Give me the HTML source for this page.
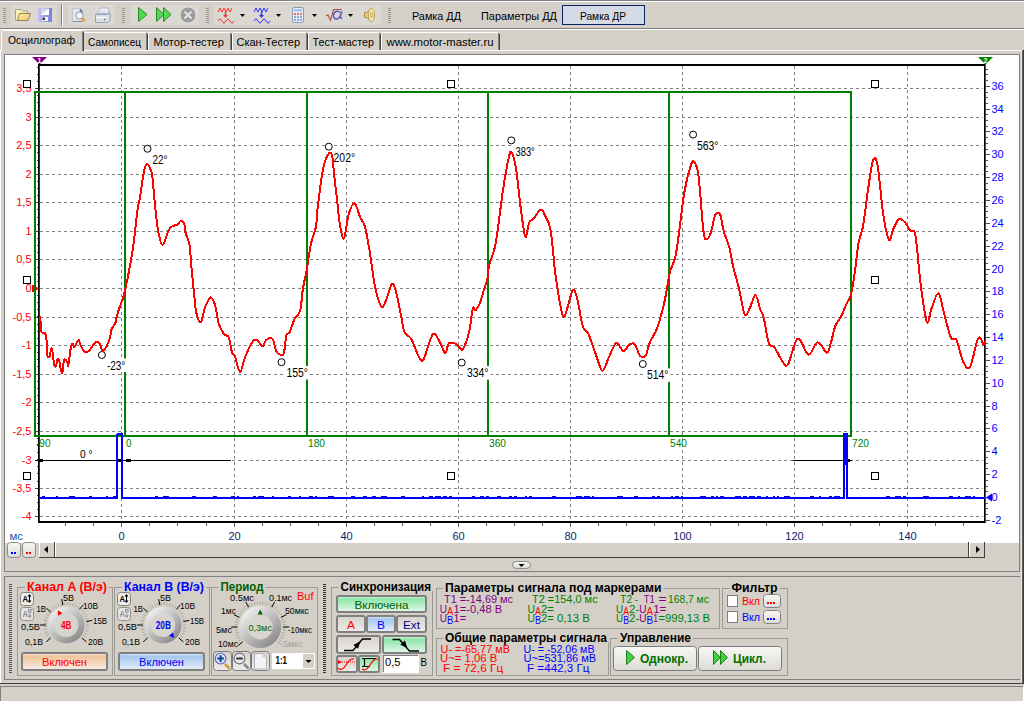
<!DOCTYPE html><html><head><meta charset="utf-8"><style>
html,body{margin:0;padding:0;background:#d4d0c8;overflow:hidden;width:1024px;height:702px}
svg{display:block;font-family:"Liberation Sans", sans-serif}
</style></head><body>
<svg width="1024" height="702" viewBox="0 0 1024 702">
<defs><linearGradient id="gOr" x1="0" y1="0" x2="0" y2="1"><stop offset="0" stop-color="#fdf4ec"/><stop offset="0.18" stop-color="#f0c49c"/><stop offset="1" stop-color="#f7ede6"/></linearGradient><linearGradient id="gBl" x1="0" y1="0" x2="0" y2="1"><stop offset="0" stop-color="#eef4fc"/><stop offset="0.18" stop-color="#a4c6ee"/><stop offset="1" stop-color="#e8eff8"/></linearGradient><linearGradient id="gGr" x1="0" y1="0" x2="0" y2="1"><stop offset="0" stop-color="#e8fbee"/><stop offset="0.18" stop-color="#8ee6a8"/><stop offset="1" stop-color="#e4f8ea"/></linearGradient><linearGradient id="gGy" x1="0" y1="0" x2="0" y2="1"><stop offset="0" stop-color="#d6d2ca"/><stop offset="1" stop-color="#efedea"/></linearGradient><linearGradient id="gBt" x1="0" y1="0" x2="0" y2="1"><stop offset="0" stop-color="#f8f8f6"/><stop offset="1" stop-color="#dcdad4"/></linearGradient><radialGradient id="gKnob" cx="0.35" cy="0.3" r="0.8"><stop offset="0" stop-color="#f4f4f4"/><stop offset="0.6" stop-color="#bdbdbd"/><stop offset="1" stop-color="#8c8c8c"/></radialGradient></defs>
<rect x="0" y="0" width="1024" height="702" fill="#d4d0c8" />
<rect x="0" y="0" width="1024" height="1" fill="#808080" />
<rect x="0" y="1" width="1024" height="1" fill="#ffffff" />
<rect x="11" y="5" width="46" height="20" fill="#dbd8d1" />
<rect x="68" y="5" width="46" height="20" fill="#dbd8d1" />
<rect x="130" y="5" width="46" height="20" fill="#dbd8d1" />
<rect x="176" y="5" width="23" height="20" fill="#dbd8d1" />
<rect x="214" y="5" width="167" height="20" fill="#dbd8d1" />
<rect x="0" y="28" width="1024" height="1" fill="#808080" />
<rect x="0" y="29" width="1024" height="1" fill="#ffffff" />
<rect x="3" y="8" width="3" height="1" fill="#9a978f" />
<rect x="3" y="10" width="3" height="1" fill="#9a978f" />
<rect x="3" y="12" width="3" height="1" fill="#9a978f" />
<rect x="3" y="14" width="3" height="1" fill="#9a978f" />
<rect x="3" y="16" width="3" height="1" fill="#9a978f" />
<rect x="3" y="18" width="3" height="1" fill="#9a978f" />
<rect x="3" y="20" width="3" height="1" fill="#9a978f" />
<rect x="3" y="22" width="3" height="1" fill="#9a978f" />
<rect x="122" y="8" width="3" height="1" fill="#9a978f" />
<rect x="122" y="10" width="3" height="1" fill="#9a978f" />
<rect x="122" y="12" width="3" height="1" fill="#9a978f" />
<rect x="122" y="14" width="3" height="1" fill="#9a978f" />
<rect x="122" y="16" width="3" height="1" fill="#9a978f" />
<rect x="122" y="18" width="3" height="1" fill="#9a978f" />
<rect x="122" y="20" width="3" height="1" fill="#9a978f" />
<rect x="122" y="22" width="3" height="1" fill="#9a978f" />
<rect x="206" y="8" width="3" height="1" fill="#9a978f" />
<rect x="206" y="10" width="3" height="1" fill="#9a978f" />
<rect x="206" y="12" width="3" height="1" fill="#9a978f" />
<rect x="206" y="14" width="3" height="1" fill="#9a978f" />
<rect x="206" y="16" width="3" height="1" fill="#9a978f" />
<rect x="206" y="18" width="3" height="1" fill="#9a978f" />
<rect x="206" y="20" width="3" height="1" fill="#9a978f" />
<rect x="206" y="22" width="3" height="1" fill="#9a978f" />
<rect x="388" y="8" width="3" height="1" fill="#9a978f" />
<rect x="388" y="10" width="3" height="1" fill="#9a978f" />
<rect x="388" y="12" width="3" height="1" fill="#9a978f" />
<rect x="388" y="14" width="3" height="1" fill="#9a978f" />
<rect x="388" y="16" width="3" height="1" fill="#9a978f" />
<rect x="388" y="18" width="3" height="1" fill="#9a978f" />
<rect x="388" y="20" width="3" height="1" fill="#9a978f" />
<rect x="388" y="22" width="3" height="1" fill="#9a978f" />
<rect x="61" y="4" width="1" height="22" fill="#808080" />
<rect x="62" y="4" width="1" height="22" fill="#ffffff" />
<g id="icons">
<defs><linearGradient id="gFold" x1="0" y1="0" x2="1" y2="1"><stop offset="0" stop-color="#fff3b8"/><stop offset="1" stop-color="#f0c050"/></linearGradient><linearGradient id="gFlop" x1="0" y1="0" x2="1" y2="0"><stop offset="0" stop-color="#c4c4fa"/><stop offset="1" stop-color="#7a7ade"/></linearGradient></defs>
<path d="M15.5 20.5V9.5h5.5l1.5 1.5h5v9z" fill="#faeeb0" stroke="#a8a48c" stroke-width="1"/>
<path d="M17.5 20.5l2 -7h11l-2.5 7z" fill="url(#gFold)" stroke="#8c8460" stroke-width="1"/>
<rect x="38" y="8" width="14" height="14" fill="url(#gFlop)"/>
<rect x="41" y="8.5" width="8" height="6.5" fill="#d8d8e0"/><path d="M41 15L49 8.5V15z" fill="#ffffff"/>
<rect x="42" y="17" width="6" height="4" fill="#f4f4f8"/><rect x="42.5" y="17.5" width="2.5" height="2.5" fill="#303040"/>
<path d="M72.5 8.5h7.5l2.5 2.5v10.5h-10z" fill="#e4e6e8" stroke="#b4c4d8" stroke-width="1"/><path d="M72.5 21.5h10" stroke="#8898b0" stroke-width="1.2"/><path d="M80 8.5l2.5 2.5v2l-3 -1z" fill="#6c7c98"/>
<circle cx="79.5" cy="15.5" r="3.6" fill="#f4f6fa" stroke="#909aa8" stroke-width="1"/><path d="M81.8 18.3l3 2.7" stroke="#e6a040" stroke-width="2.6"/>
<path d="M97 13.5l3.5 -5.5h8.5l-1.5 5.5z" fill="#f0f3f8" stroke="#a4b4c8" stroke-width="0.9"/><path d="M99.5 11h6M98.8 12.3h6" stroke="#c0cad8" stroke-width="0.7"/>
<path d="M95.5 14.5h12l2.5 -2v8.5l-2.5 1.5h-12z" fill="#d8e0ea" stroke="#8c9cb4" stroke-width="0.9"/><path d="M96 17.5h11" stroke="#ffffff" stroke-width="1"/><rect x="104" y="18.5" width="1.3" height="1" fill="#30a040"/><rect x="104" y="19.5" width="1.3" height="1" fill="#d04040"/>
<path d="M138.5 7.5v14l8.5-7z" fill="#52d852" stroke="#2a8a2a"/>
<path d="M156.5 7.5v14l7.5-7z" fill="#52d852" stroke="#2a8a2a"/><path d="M163.5 7.5v14l7.5-7z" fill="#52d852" stroke="#2a8a2a"/>
<circle cx="188" cy="15" r="8" fill="#9c9c9c" stroke="#e8e8e8" stroke-width="0.8"/><path d="M184.5 11.5l7 7M191.5 11.5l-7 7" stroke="#e4e4e4" stroke-width="2"/>
<path d="M218 12 l2 -4 l2 4 l2 -4 l2 4 l2 -4 l2 4 l2 -4" fill="none" stroke="#ff3030" stroke-width="1"/>
<path d="M225.5 12v3" stroke="#ff3030" stroke-width="1.5"/><path d="M223 15h5l-2.5 3z" fill="#ff3030"/>
<path d="M218 21 q2 -4 4 0 t4 0 t4 0 t4 0" fill="none" stroke="#ff3030" stroke-width="1"/>
<path d="M254 12 l2 -4 l2 4 l2 -4 l2 4 l2 -4 l2 4 l2 -4" fill="none" stroke="#3030ff" stroke-width="1"/>
<path d="M261.5 12v3" stroke="#3030ff" stroke-width="1.5"/><path d="M259 15h5l-2.5 3z" fill="#3030ff"/>
<path d="M254 21 q2 -4 4 0 t4 0 t4 0 t4 0" fill="none" stroke="#3030ff" stroke-width="1"/>
<path d="M240 14h5l-2.5 3z" fill="#000"/>
<path d="M276 14h5l-2.5 3z" fill="#000"/>
<path d="M312 14h5l-2.5 3z" fill="#000"/>
<path d="M348 14h5l-2.5 3z" fill="#000"/>
<rect x="292.5" y="7.5" width="11" height="15" rx="1.5" fill="#e4ecf6" stroke="#8c9cb4"/><rect x="294" y="9" width="8" height="2.5" fill="#a8c4e8"/>
<rect x="294" y="13" width="2" height="2" fill="#e87070" />
<rect x="297" y="13" width="2" height="2" fill="#e87070" />
<rect x="300" y="13" width="2" height="2" fill="#e87070" />
<rect x="294" y="16" width="2" height="2" fill="#90a8d8" />
<rect x="297" y="16" width="2" height="2" fill="#90a8d8" />
<rect x="300" y="16" width="2" height="2" fill="#90a8d8" />
<rect x="294" y="19" width="2" height="2" fill="#90a8d8" />
<rect x="297" y="19" width="2" height="2" fill="#90a8d8" />
<rect x="300" y="19" width="2" height="2" fill="#90a8d8" />
<path d="M326 16l2 -1l2.5 5.5l3 -11h8.5" fill="none" stroke="#b0503a" stroke-width="1.1"/>
<path d="M340.5 12.5q-2 -2 -4.5 -1q-2.5 1 -2.5 4q0 3.5 3 3.5q2.5 0 4 -3.5q1 -2.5 1.5 -4M340 14.5q0.5 3.5 2 4.5" fill="none" stroke="#5454cc" stroke-width="1.4"/>
<path d="M364.5 12.5h2.5l4 -4.5v14l-4 -4.5h-2.5z" fill="#e4cc70" stroke="#a89048" stroke-width="0.9"/><ellipse cx="371.5" cy="15" rx="3.2" ry="6.8" fill="#f2e4a8" stroke="#b8a058" stroke-width="0.9"/><ellipse cx="371.8" cy="15" rx="1.3" ry="2.6" fill="none" stroke="#b09040" stroke-width="0.7"/>
</g>
<text x="412" y="20" font-size="11" fill="#000" textLength="49" lengthAdjust="spacingAndGlyphs" >Рамка ДД</text>
<text x="481" y="20" font-size="11" fill="#000" textLength="76" lengthAdjust="spacingAndGlyphs" >Параметры ДД</text>
<rect x="562.5" y="5.5" width="82" height="19" fill="#d4dae6" stroke="#0a246a"/>
<text x="580" y="20" font-size="11" fill="#000" textLength="46" lengthAdjust="spacingAndGlyphs" >Рамка ДР</text>
<rect x="84" y="32" width="62" height="1" fill="#ffffff" />
<rect x="83" y="33" width="1" height="17" fill="#ffffff" />
<rect x="146" y="33" width="1" height="17" fill="#808080" />
<rect x="147" y="34" width="1" height="16" fill="#404040" />
<text x="88" y="46" font-size="11" fill="#000" textLength="53" lengthAdjust="spacingAndGlyphs" >Самописец</text>
<rect x="149" y="32" width="81" height="1" fill="#ffffff" />
<rect x="148" y="33" width="1" height="17" fill="#ffffff" />
<rect x="230" y="33" width="1" height="17" fill="#808080" />
<rect x="231" y="34" width="1" height="16" fill="#404040" />
<text x="153.5" y="46" font-size="11" fill="#000" textLength="70.5" lengthAdjust="spacingAndGlyphs" >Мотор-тестер</text>
<rect x="233" y="32" width="73" height="1" fill="#ffffff" />
<rect x="232" y="33" width="1" height="17" fill="#ffffff" />
<rect x="306" y="33" width="1" height="17" fill="#808080" />
<rect x="307" y="34" width="1" height="16" fill="#404040" />
<text x="236.5" y="46" font-size="11" fill="#000" textLength="63.5" lengthAdjust="spacingAndGlyphs" >Скан-Тестер</text>
<rect x="309" y="32" width="70" height="1" fill="#ffffff" />
<rect x="308" y="33" width="1" height="17" fill="#ffffff" />
<rect x="379" y="33" width="1" height="17" fill="#808080" />
<rect x="380" y="34" width="1" height="16" fill="#404040" />
<text x="312.5" y="46" font-size="11" fill="#000" textLength="61.5" lengthAdjust="spacingAndGlyphs" >Тест-мастер</text>
<rect x="382" y="32" width="116" height="1" fill="#ffffff" />
<rect x="381" y="33" width="1" height="17" fill="#ffffff" />
<rect x="498" y="33" width="1" height="17" fill="#808080" />
<rect x="499" y="34" width="1" height="16" fill="#404040" />
<text x="386.5" y="46" font-size="11" fill="#000" textLength="107" lengthAdjust="spacingAndGlyphs" >www.motor-master.ru</text>
<rect x="2" y="30" width="81" height="1" fill="#ffffff" />
<rect x="1" y="31" width="1" height="20" fill="#ffffff" />
<rect x="82" y="31" width="1" height="20" fill="#808080" />
<rect x="83" y="32" width="1" height="19" fill="#404040" />
<text x="8" y="44" font-size="11" fill="#000" textLength="67" lengthAdjust="spacingAndGlyphs" >Осциллограф</text>
<rect x="0" y="50" width="1" height="1" fill="#ffffff" />
<rect x="84" y="50" width="938" height="1" fill="#ffffff" />
<rect x="0" y="50" width="1" height="633" fill="#ffffff" />
<rect x="1021" y="50" width="1" height="634" fill="#ebe9e4" />
<rect x="1022" y="50" width="1" height="634" fill="#5a5a5a" />
<rect x="1023" y="50" width="1" height="634" fill="#404040" />
<rect x="4" y="54" width="1016" height="518" fill="#808080" />
<rect x="5" y="55" width="1014" height="516" fill="#d4d0c8" />
<rect x="5" y="55" width="1014" height="487" fill="#ffffff" />
<rect x="5" y="542" width="1014" height="1" fill="#ffffff" />
<g id="plot">
<line x1="40" y1="88.5" x2="983" y2="88.5" stroke="#808080" stroke-width="1" stroke-dasharray="3 3" shape-rendering="crispEdges"/>
<rect x="35" y="88" width="3" height="1" fill="#404040" />
<text x="31.5" y="91.6" font-size="11" fill="#ff0000" text-anchor="end" >3,5</text>
<line x1="40" y1="117.5" x2="983" y2="117.5" stroke="#808080" stroke-width="1" stroke-dasharray="3 3" shape-rendering="crispEdges"/>
<rect x="35" y="117" width="3" height="1" fill="#404040" />
<text x="31.5" y="120.6" font-size="11" fill="#ff0000" text-anchor="end" >3</text>
<line x1="40" y1="145.5" x2="983" y2="145.5" stroke="#808080" stroke-width="1" stroke-dasharray="3 3" shape-rendering="crispEdges"/>
<rect x="35" y="145" width="3" height="1" fill="#404040" />
<text x="31.5" y="148.6" font-size="11" fill="#ff0000" text-anchor="end" >2,5</text>
<line x1="40" y1="174.5" x2="983" y2="174.5" stroke="#808080" stroke-width="1" stroke-dasharray="3 3" shape-rendering="crispEdges"/>
<rect x="35" y="174" width="3" height="1" fill="#404040" />
<text x="31.5" y="177.6" font-size="11" fill="#ff0000" text-anchor="end" >2</text>
<line x1="40" y1="202.5" x2="983" y2="202.5" stroke="#808080" stroke-width="1" stroke-dasharray="3 3" shape-rendering="crispEdges"/>
<rect x="35" y="202" width="3" height="1" fill="#404040" />
<text x="31.5" y="205.6" font-size="11" fill="#ff0000" text-anchor="end" >1,5</text>
<line x1="40" y1="231.5" x2="983" y2="231.5" stroke="#808080" stroke-width="1" stroke-dasharray="3 3" shape-rendering="crispEdges"/>
<rect x="35" y="231" width="3" height="1" fill="#404040" />
<text x="31.5" y="234.6" font-size="11" fill="#ff0000" text-anchor="end" >1</text>
<line x1="40" y1="259.5" x2="983" y2="259.5" stroke="#808080" stroke-width="1" stroke-dasharray="3 3" shape-rendering="crispEdges"/>
<rect x="35" y="259" width="3" height="1" fill="#404040" />
<text x="31.5" y="262.6" font-size="11" fill="#ff0000" text-anchor="end" >0,5</text>
<line x1="40" y1="288.5" x2="983" y2="288.5" stroke="#808080" stroke-width="1" stroke-dasharray="3 3" shape-rendering="crispEdges"/>
<rect x="35" y="288" width="3" height="1" fill="#404040" />
<text x="31.5" y="291.6" font-size="11" fill="#ff0000" text-anchor="end" >0</text>
<line x1="40" y1="317.5" x2="983" y2="317.5" stroke="#808080" stroke-width="1" stroke-dasharray="3 3" shape-rendering="crispEdges"/>
<rect x="35" y="317" width="3" height="1" fill="#404040" />
<text x="31.5" y="320.6" font-size="11" fill="#ff0000" text-anchor="end" >-0,5</text>
<line x1="40" y1="345.5" x2="983" y2="345.5" stroke="#808080" stroke-width="1" stroke-dasharray="3 3" shape-rendering="crispEdges"/>
<rect x="35" y="345" width="3" height="1" fill="#404040" />
<text x="31.5" y="348.6" font-size="11" fill="#ff0000" text-anchor="end" >-1</text>
<line x1="40" y1="374.5" x2="983" y2="374.5" stroke="#808080" stroke-width="1" stroke-dasharray="3 3" shape-rendering="crispEdges"/>
<rect x="35" y="374" width="3" height="1" fill="#404040" />
<text x="31.5" y="377.6" font-size="11" fill="#ff0000" text-anchor="end" >-1,5</text>
<line x1="40" y1="402.5" x2="983" y2="402.5" stroke="#808080" stroke-width="1" stroke-dasharray="3 3" shape-rendering="crispEdges"/>
<rect x="35" y="402" width="3" height="1" fill="#404040" />
<text x="31.5" y="405.6" font-size="11" fill="#ff0000" text-anchor="end" >-2</text>
<line x1="40" y1="431.5" x2="983" y2="431.5" stroke="#808080" stroke-width="1" stroke-dasharray="3 3" shape-rendering="crispEdges"/>
<rect x="35" y="431" width="3" height="1" fill="#404040" />
<text x="31.5" y="434.6" font-size="11" fill="#ff0000" text-anchor="end" >-2,5</text>
<line x1="40" y1="460.5" x2="983" y2="460.5" stroke="#808080" stroke-width="1" stroke-dasharray="3 3" shape-rendering="crispEdges"/>
<rect x="35" y="460" width="3" height="1" fill="#404040" />
<text x="31.5" y="463.6" font-size="11" fill="#ff0000" text-anchor="end" >-3</text>
<line x1="40" y1="488.5" x2="983" y2="488.5" stroke="#808080" stroke-width="1" stroke-dasharray="3 3" shape-rendering="crispEdges"/>
<rect x="35" y="488" width="3" height="1" fill="#404040" />
<text x="31.5" y="491.6" font-size="11" fill="#ff0000" text-anchor="end" >-3,5</text>
<line x1="40" y1="516.5" x2="983" y2="516.5" stroke="#808080" stroke-width="1" stroke-dasharray="3 3" shape-rendering="crispEdges"/>
<rect x="35" y="516" width="3" height="1" fill="#404040" />
<text x="31.5" y="519.6" font-size="11" fill="#ff0000" text-anchor="end" >-4</text>
<line x1="121.5" y1="66" x2="121.5" y2="521" stroke="#808080" stroke-width="1" stroke-dasharray="3 3" shape-rendering="crispEdges"/>
<text x="121.5" y="540" font-size="11" fill="#0a246a" text-anchor="middle" >0</text>
<line x1="234.5" y1="66" x2="234.5" y2="521" stroke="#808080" stroke-width="1" stroke-dasharray="3 3" shape-rendering="crispEdges"/>
<text x="234.5" y="540" font-size="11" fill="#0a246a" text-anchor="middle" >20</text>
<line x1="346.5" y1="66" x2="346.5" y2="521" stroke="#808080" stroke-width="1" stroke-dasharray="3 3" shape-rendering="crispEdges"/>
<text x="346.5" y="540" font-size="11" fill="#0a246a" text-anchor="middle" >40</text>
<line x1="458.5" y1="66" x2="458.5" y2="521" stroke="#808080" stroke-width="1" stroke-dasharray="3 3" shape-rendering="crispEdges"/>
<text x="458.5" y="540" font-size="11" fill="#0a246a" text-anchor="middle" >60</text>
<line x1="570.5" y1="66" x2="570.5" y2="521" stroke="#808080" stroke-width="1" stroke-dasharray="3 3" shape-rendering="crispEdges"/>
<text x="570.5" y="540" font-size="11" fill="#0a246a" text-anchor="middle" >80</text>
<line x1="682.5" y1="66" x2="682.5" y2="521" stroke="#808080" stroke-width="1" stroke-dasharray="3 3" shape-rendering="crispEdges"/>
<text x="682.5" y="540" font-size="11" fill="#0a246a" text-anchor="middle" >100</text>
<line x1="794.5" y1="66" x2="794.5" y2="521" stroke="#808080" stroke-width="1" stroke-dasharray="3 3" shape-rendering="crispEdges"/>
<text x="794.5" y="540" font-size="11" fill="#0a246a" text-anchor="middle" >120</text>
<line x1="907.5" y1="66" x2="907.5" y2="521" stroke="#808080" stroke-width="1" stroke-dasharray="3 3" shape-rendering="crispEdges"/>
<text x="907.5" y="540" font-size="11" fill="#0a246a" text-anchor="middle" >140</text>
<rect x="37" y="67" width="1" height="1" fill="#404040" />
<rect x="37" y="74" width="1" height="1" fill="#404040" />
<rect x="37" y="81" width="1" height="1" fill="#404040" />
<rect x="37" y="88" width="1" height="1" fill="#404040" />
<rect x="37" y="95" width="1" height="1" fill="#404040" />
<rect x="37" y="102" width="1" height="1" fill="#404040" />
<rect x="37" y="110" width="1" height="1" fill="#404040" />
<rect x="37" y="117" width="1" height="1" fill="#404040" />
<rect x="37" y="124" width="1" height="1" fill="#404040" />
<rect x="37" y="131" width="1" height="1" fill="#404040" />
<rect x="37" y="138" width="1" height="1" fill="#404040" />
<rect x="37" y="145" width="1" height="1" fill="#404040" />
<rect x="37" y="152" width="1" height="1" fill="#404040" />
<rect x="37" y="160" width="1" height="1" fill="#404040" />
<rect x="37" y="167" width="1" height="1" fill="#404040" />
<rect x="37" y="174" width="1" height="1" fill="#404040" />
<rect x="37" y="181" width="1" height="1" fill="#404040" />
<rect x="37" y="188" width="1" height="1" fill="#404040" />
<rect x="37" y="195" width="1" height="1" fill="#404040" />
<rect x="37" y="202" width="1" height="1" fill="#404040" />
<rect x="37" y="209" width="1" height="1" fill="#404040" />
<rect x="37" y="217" width="1" height="1" fill="#404040" />
<rect x="37" y="224" width="1" height="1" fill="#404040" />
<rect x="37" y="231" width="1" height="1" fill="#404040" />
<rect x="37" y="238" width="1" height="1" fill="#404040" />
<rect x="37" y="245" width="1" height="1" fill="#404040" />
<rect x="37" y="252" width="1" height="1" fill="#404040" />
<rect x="37" y="259" width="1" height="1" fill="#404040" />
<rect x="37" y="267" width="1" height="1" fill="#404040" />
<rect x="37" y="274" width="1" height="1" fill="#404040" />
<rect x="37" y="281" width="1" height="1" fill="#404040" />
<rect x="37" y="288" width="1" height="1" fill="#404040" />
<rect x="37" y="295" width="1" height="1" fill="#404040" />
<rect x="37" y="302" width="1" height="1" fill="#404040" />
<rect x="37" y="309" width="1" height="1" fill="#404040" />
<rect x="37" y="316" width="1" height="1" fill="#404040" />
<rect x="37" y="324" width="1" height="1" fill="#404040" />
<rect x="37" y="331" width="1" height="1" fill="#404040" />
<rect x="37" y="338" width="1" height="1" fill="#404040" />
<rect x="37" y="345" width="1" height="1" fill="#404040" />
<rect x="37" y="352" width="1" height="1" fill="#404040" />
<rect x="37" y="359" width="1" height="1" fill="#404040" />
<rect x="37" y="366" width="1" height="1" fill="#404040" />
<rect x="37" y="374" width="1" height="1" fill="#404040" />
<rect x="37" y="381" width="1" height="1" fill="#404040" />
<rect x="37" y="388" width="1" height="1" fill="#404040" />
<rect x="37" y="395" width="1" height="1" fill="#404040" />
<rect x="37" y="402" width="1" height="1" fill="#404040" />
<rect x="37" y="409" width="1" height="1" fill="#404040" />
<rect x="37" y="416" width="1" height="1" fill="#404040" />
<rect x="37" y="423" width="1" height="1" fill="#404040" />
<rect x="37" y="431" width="1" height="1" fill="#404040" />
<rect x="37" y="438" width="1" height="1" fill="#404040" />
<rect x="37" y="445" width="1" height="1" fill="#404040" />
<rect x="37" y="452" width="1" height="1" fill="#404040" />
<rect x="37" y="459" width="1" height="1" fill="#404040" />
<rect x="37" y="466" width="1" height="1" fill="#404040" />
<rect x="37" y="473" width="1" height="1" fill="#404040" />
<rect x="37" y="481" width="1" height="1" fill="#404040" />
<rect x="37" y="488" width="1" height="1" fill="#404040" />
<rect x="37" y="495" width="1" height="1" fill="#404040" />
<rect x="37" y="502" width="1" height="1" fill="#404040" />
<rect x="37" y="509" width="1" height="1" fill="#404040" />
<rect x="37" y="516" width="1" height="1" fill="#404040" />
<rect x="65" y="523" width="1" height="3" fill="#606060" />
<rect x="93" y="523" width="1" height="3" fill="#606060" />
<rect x="121" y="523" width="1" height="4" fill="#606060" />
<rect x="149" y="523" width="1" height="3" fill="#606060" />
<rect x="177" y="523" width="1" height="3" fill="#606060" />
<rect x="206" y="523" width="1" height="3" fill="#606060" />
<rect x="234" y="523" width="1" height="4" fill="#606060" />
<rect x="262" y="523" width="1" height="3" fill="#606060" />
<rect x="290" y="523" width="1" height="3" fill="#606060" />
<rect x="318" y="523" width="1" height="3" fill="#606060" />
<rect x="346" y="523" width="1" height="4" fill="#606060" />
<rect x="374" y="523" width="1" height="3" fill="#606060" />
<rect x="402" y="523" width="1" height="3" fill="#606060" />
<rect x="430" y="523" width="1" height="3" fill="#606060" />
<rect x="458" y="523" width="1" height="4" fill="#606060" />
<rect x="486" y="523" width="1" height="3" fill="#606060" />
<rect x="514" y="523" width="1" height="3" fill="#606060" />
<rect x="542" y="523" width="1" height="3" fill="#606060" />
<rect x="570" y="523" width="1" height="4" fill="#606060" />
<rect x="598" y="523" width="1" height="3" fill="#606060" />
<rect x="626" y="523" width="1" height="3" fill="#606060" />
<rect x="654" y="523" width="1" height="3" fill="#606060" />
<rect x="682" y="523" width="1" height="4" fill="#606060" />
<rect x="710" y="523" width="1" height="3" fill="#606060" />
<rect x="738" y="523" width="1" height="3" fill="#606060" />
<rect x="766" y="523" width="1" height="3" fill="#606060" />
<rect x="794" y="523" width="1" height="4" fill="#606060" />
<rect x="822" y="523" width="1" height="3" fill="#606060" />
<rect x="850" y="523" width="1" height="3" fill="#606060" />
<rect x="879" y="523" width="1" height="3" fill="#606060" />
<rect x="907" y="523" width="1" height="4" fill="#606060" />
<rect x="935" y="523" width="1" height="3" fill="#606060" />
<rect x="963" y="523" width="1" height="3" fill="#606060" />
<rect x="986" y="69" width="2" height="1" fill="#505050" />
<rect x="986" y="74" width="2" height="1" fill="#505050" />
<rect x="986" y="80" width="2" height="1" fill="#505050" />
<rect x="986" y="86" width="4" height="1" fill="#505050" />
<text x="991.5" y="89.6" font-size="11" fill="#0000ff" >36</text>
<rect x="986" y="92" width="2" height="1" fill="#505050" />
<rect x="986" y="97" width="2" height="1" fill="#505050" />
<rect x="986" y="103" width="2" height="1" fill="#505050" />
<rect x="986" y="109" width="4" height="1" fill="#505050" />
<text x="991.5" y="112.6" font-size="11" fill="#0000ff" >34</text>
<rect x="986" y="114" width="2" height="1" fill="#505050" />
<rect x="986" y="120" width="2" height="1" fill="#505050" />
<rect x="986" y="126" width="2" height="1" fill="#505050" />
<rect x="986" y="131" width="4" height="1" fill="#505050" />
<text x="991.5" y="134.6" font-size="11" fill="#0000ff" >32</text>
<rect x="986" y="137" width="2" height="1" fill="#505050" />
<rect x="986" y="143" width="2" height="1" fill="#505050" />
<rect x="986" y="149" width="2" height="1" fill="#505050" />
<rect x="986" y="154" width="4" height="1" fill="#505050" />
<text x="991.5" y="157.6" font-size="11" fill="#0000ff" >30</text>
<rect x="986" y="160" width="2" height="1" fill="#505050" />
<rect x="986" y="166" width="2" height="1" fill="#505050" />
<rect x="986" y="171" width="2" height="1" fill="#505050" />
<rect x="986" y="177" width="4" height="1" fill="#505050" />
<text x="991.5" y="180.6" font-size="11" fill="#0000ff" >28</text>
<rect x="986" y="183" width="2" height="1" fill="#505050" />
<rect x="986" y="189" width="2" height="1" fill="#505050" />
<rect x="986" y="194" width="2" height="1" fill="#505050" />
<rect x="986" y="200" width="4" height="1" fill="#505050" />
<text x="991.5" y="203.6" font-size="11" fill="#0000ff" >26</text>
<rect x="986" y="206" width="2" height="1" fill="#505050" />
<rect x="986" y="211" width="2" height="1" fill="#505050" />
<rect x="986" y="217" width="2" height="1" fill="#505050" />
<rect x="986" y="223" width="4" height="1" fill="#505050" />
<text x="991.5" y="226.6" font-size="11" fill="#0000ff" >24</text>
<rect x="986" y="229" width="2" height="1" fill="#505050" />
<rect x="986" y="234" width="2" height="1" fill="#505050" />
<rect x="986" y="240" width="2" height="1" fill="#505050" />
<rect x="986" y="246" width="4" height="1" fill="#505050" />
<text x="991.5" y="249.6" font-size="11" fill="#0000ff" >22</text>
<rect x="986" y="251" width="2" height="1" fill="#505050" />
<rect x="986" y="257" width="2" height="1" fill="#505050" />
<rect x="986" y="263" width="2" height="1" fill="#505050" />
<rect x="986" y="269" width="4" height="1" fill="#505050" />
<text x="991.5" y="272.6" font-size="11" fill="#0000ff" >20</text>
<rect x="986" y="274" width="2" height="1" fill="#505050" />
<rect x="986" y="280" width="2" height="1" fill="#505050" />
<rect x="986" y="286" width="2" height="1" fill="#505050" />
<rect x="986" y="291" width="4" height="1" fill="#505050" />
<text x="991.5" y="294.6" font-size="11" fill="#0000ff" >18</text>
<rect x="986" y="297" width="2" height="1" fill="#505050" />
<rect x="986" y="303" width="2" height="1" fill="#505050" />
<rect x="986" y="308" width="2" height="1" fill="#505050" />
<rect x="986" y="314" width="4" height="1" fill="#505050" />
<text x="991.5" y="317.6" font-size="11" fill="#0000ff" >16</text>
<rect x="986" y="320" width="2" height="1" fill="#505050" />
<rect x="986" y="326" width="2" height="1" fill="#505050" />
<rect x="986" y="331" width="2" height="1" fill="#505050" />
<rect x="986" y="337" width="4" height="1" fill="#505050" />
<text x="991.5" y="340.6" font-size="11" fill="#0000ff" >14</text>
<rect x="986" y="343" width="2" height="1" fill="#505050" />
<rect x="986" y="348" width="2" height="1" fill="#505050" />
<rect x="986" y="354" width="2" height="1" fill="#505050" />
<rect x="986" y="360" width="4" height="1" fill="#505050" />
<text x="991.5" y="363.6" font-size="11" fill="#0000ff" >12</text>
<rect x="986" y="366" width="2" height="1" fill="#505050" />
<rect x="986" y="371" width="2" height="1" fill="#505050" />
<rect x="986" y="377" width="2" height="1" fill="#505050" />
<rect x="986" y="383" width="4" height="1" fill="#505050" />
<text x="991.5" y="386.6" font-size="11" fill="#0000ff" >10</text>
<rect x="986" y="388" width="2" height="1" fill="#505050" />
<rect x="986" y="394" width="2" height="1" fill="#505050" />
<rect x="986" y="400" width="2" height="1" fill="#505050" />
<rect x="986" y="406" width="4" height="1" fill="#505050" />
<text x="991.5" y="409.6" font-size="11" fill="#0000ff" >8</text>
<rect x="986" y="411" width="2" height="1" fill="#505050" />
<rect x="986" y="417" width="2" height="1" fill="#505050" />
<rect x="986" y="423" width="2" height="1" fill="#505050" />
<rect x="986" y="428" width="4" height="1" fill="#505050" />
<text x="991.5" y="431.6" font-size="11" fill="#0000ff" >6</text>
<rect x="986" y="434" width="2" height="1" fill="#505050" />
<rect x="986" y="440" width="2" height="1" fill="#505050" />
<rect x="986" y="446" width="2" height="1" fill="#505050" />
<rect x="986" y="451" width="4" height="1" fill="#505050" />
<text x="991.5" y="454.6" font-size="11" fill="#0000ff" >4</text>
<rect x="986" y="457" width="2" height="1" fill="#505050" />
<rect x="986" y="463" width="2" height="1" fill="#505050" />
<rect x="986" y="468" width="2" height="1" fill="#505050" />
<rect x="986" y="474" width="4" height="1" fill="#505050" />
<text x="991.5" y="477.6" font-size="11" fill="#0000ff" >2</text>
<rect x="986" y="480" width="2" height="1" fill="#505050" />
<rect x="986" y="486" width="2" height="1" fill="#505050" />
<rect x="986" y="491" width="2" height="1" fill="#505050" />
<rect x="986" y="497" width="4" height="1" fill="#505050" />
<text x="991.5" y="500.6" font-size="11" fill="#0000ff" >0</text>
<rect x="986" y="503" width="2" height="1" fill="#505050" />
<rect x="986" y="508" width="2" height="1" fill="#505050" />
<rect x="986" y="514" width="2" height="1" fill="#505050" />
<rect x="986" y="520" width="4" height="1" fill="#505050" />
<text x="991.5" y="523.6" font-size="11" fill="#0000ff" >-2</text>
<rect x="38" y="64" width="1" height="459" fill="#000" />
<rect x="39" y="64" width="1" height="458" fill="#800080" />
<rect x="39" y="64" width="946" height="2" fill="#000" />
<rect x="38" y="521" width="948" height="2" fill="#000" />
<rect x="984" y="64" width="1" height="459" fill="#000" />
<rect x="985" y="64" width="1" height="459" fill="#008000" />
<path d="M32 57h15l-7.5 7.5z" fill="#800080"/><text x="39.5" y="63" font-size="7" fill="#fff" font-weight="bold" text-anchor="middle">1</text>
<path d="M978 57h15l-7.5 7.5z" fill="#008000"/><text x="985.5" y="63" font-size="7" fill="#fff" font-weight="bold" text-anchor="middle">2</text>
<rect x="34" y="91" width="818" height="2" fill="#008000" />
<rect x="34" y="435" width="818" height="2" fill="#008000" />
<rect x="34" y="91" width="2" height="346" fill="#008000" />
<rect x="124" y="91" width="2" height="346" fill="#008000" />
<rect x="306" y="91" width="2" height="346" fill="#008000" />
<rect x="487" y="91" width="2" height="346" fill="#008000" />
<rect x="668" y="91" width="2" height="346" fill="#008000" />
<rect x="850" y="91" width="2" height="346" fill="#008000" />
<text x="36" y="447" font-size="11" fill="#008000" textLength="14.5" lengthAdjust="spacingAndGlyphs" >-90</text>
<text x="126" y="447" font-size="11" fill="#008000" textLength="5.5" lengthAdjust="spacingAndGlyphs" >0</text>
<text x="308" y="447" font-size="11" fill="#008000" textLength="17" lengthAdjust="spacingAndGlyphs" >180</text>
<text x="489" y="447" font-size="11" fill="#008000" textLength="17" lengthAdjust="spacingAndGlyphs" >360</text>
<text x="670" y="447" font-size="11" fill="#008000" textLength="17" lengthAdjust="spacingAndGlyphs" >540</text>
<text x="852" y="447" font-size="11" fill="#008000" textLength="17" lengthAdjust="spacingAndGlyphs" >720</text>
<rect x="35" y="460" width="196" height="1" fill="#000" />
<rect x="793" y="460" width="59" height="1" fill="#000" />
<rect x="38" y="459" width="5" height="3" fill="#000" />
<rect x="117" y="459" width="5" height="3" fill="#000" />
<rect x="126" y="459" width="5" height="3" fill="#000" />
<rect x="845" y="459" width="5" height="3" fill="#000" />
<text x="80" y="457.5" font-size="11" fill="#000" textLength="12.5" lengthAdjust="spacingAndGlyphs" >0 °</text>
<rect x="40" y="497" width="78" height="2" fill="#0000ff" />
<rect x="42" y="496" width="3" height="1" fill="#0000ff" />
<rect x="56" y="496" width="2" height="1" fill="#0000ff" />
<rect x="69" y="496" width="6" height="1" fill="#0000ff" />
<rect x="89" y="496" width="3" height="1" fill="#0000ff" />
<rect x="106" y="496" width="2" height="1" fill="#0000ff" />
<rect x="113" y="496" width="4" height="1" fill="#0000ff" />
<rect x="116" y="434" width="2" height="65" fill="#0000ff" />
<rect x="117" y="433" width="5" height="2" fill="#0000ff" />
<rect x="121" y="433" width="2" height="66" fill="#0000ff" />
<rect x="123" y="497" width="721" height="2" fill="#0000ff" />
<rect x="155" y="496" width="3" height="1" fill="#0000ff" />
<rect x="163" y="496" width="6" height="1" fill="#0000ff" />
<rect x="192" y="496" width="4" height="1" fill="#0000ff" />
<rect x="213" y="496" width="4" height="1" fill="#0000ff" />
<rect x="231" y="496" width="4" height="1" fill="#0000ff" />
<rect x="237" y="496" width="2" height="1" fill="#0000ff" />
<rect x="253" y="496" width="3" height="1" fill="#0000ff" />
<rect x="258" y="496" width="6" height="1" fill="#0000ff" />
<rect x="272" y="496" width="2" height="1" fill="#0000ff" />
<rect x="288" y="496" width="3" height="1" fill="#0000ff" />
<rect x="299" y="496" width="2" height="1" fill="#0000ff" />
<rect x="309" y="496" width="4" height="1" fill="#0000ff" />
<rect x="315" y="496" width="2" height="1" fill="#0000ff" />
<rect x="328" y="496" width="6" height="1" fill="#0000ff" />
<rect x="351" y="496" width="4" height="1" fill="#0000ff" />
<rect x="363" y="496" width="4" height="1" fill="#0000ff" />
<rect x="372" y="496" width="4" height="1" fill="#0000ff" />
<rect x="381" y="496" width="6" height="1" fill="#0000ff" />
<rect x="401" y="496" width="4" height="1" fill="#0000ff" />
<rect x="422" y="496" width="2" height="1" fill="#0000ff" />
<rect x="429" y="496" width="4" height="1" fill="#0000ff" />
<rect x="435" y="496" width="6" height="1" fill="#0000ff" />
<rect x="443" y="496" width="4" height="1" fill="#0000ff" />
<rect x="449" y="496" width="3" height="1" fill="#0000ff" />
<rect x="472" y="496" width="3" height="1" fill="#0000ff" />
<rect x="480" y="496" width="4" height="1" fill="#0000ff" />
<rect x="486" y="496" width="3" height="1" fill="#0000ff" />
<rect x="497" y="496" width="4" height="1" fill="#0000ff" />
<rect x="509" y="496" width="3" height="1" fill="#0000ff" />
<rect x="514" y="496" width="3" height="1" fill="#0000ff" />
<rect x="525" y="496" width="2" height="1" fill="#0000ff" />
<rect x="529" y="496" width="3" height="1" fill="#0000ff" />
<rect x="552" y="496" width="4" height="1" fill="#0000ff" />
<rect x="576" y="496" width="6" height="1" fill="#0000ff" />
<rect x="584" y="496" width="6" height="1" fill="#0000ff" />
<rect x="592" y="496" width="2" height="1" fill="#0000ff" />
<rect x="617" y="496" width="6" height="1" fill="#0000ff" />
<rect x="634" y="496" width="4" height="1" fill="#0000ff" />
<rect x="652" y="496" width="3" height="1" fill="#0000ff" />
<rect x="657" y="496" width="3" height="1" fill="#0000ff" />
<rect x="671" y="496" width="2" height="1" fill="#0000ff" />
<rect x="675" y="496" width="4" height="1" fill="#0000ff" />
<rect x="681" y="496" width="2" height="1" fill="#0000ff" />
<rect x="700" y="496" width="6" height="1" fill="#0000ff" />
<rect x="711" y="496" width="3" height="1" fill="#0000ff" />
<rect x="716" y="496" width="2" height="1" fill="#0000ff" />
<rect x="720" y="496" width="4" height="1" fill="#0000ff" />
<rect x="735" y="496" width="6" height="1" fill="#0000ff" />
<rect x="743" y="496" width="4" height="1" fill="#0000ff" />
<rect x="749" y="496" width="6" height="1" fill="#0000ff" />
<rect x="757" y="496" width="4" height="1" fill="#0000ff" />
<rect x="766" y="496" width="2" height="1" fill="#0000ff" />
<rect x="773" y="496" width="2" height="1" fill="#0000ff" />
<rect x="777" y="496" width="2" height="1" fill="#0000ff" />
<rect x="784" y="496" width="6" height="1" fill="#0000ff" />
<rect x="810" y="496" width="4" height="1" fill="#0000ff" />
<rect x="819" y="496" width="2" height="1" fill="#0000ff" />
<rect x="829" y="496" width="3" height="1" fill="#0000ff" />
<rect x="834" y="496" width="6" height="1" fill="#0000ff" />
<rect x="843" y="433" width="5" height="32" fill="#0000ff" />
<rect x="843" y="465" width="2" height="34" fill="#0000ff" />
<rect x="846" y="465" width="2" height="34" fill="#0000ff" />
<rect x="848" y="497" width="137" height="2" fill="#0000ff" />
<rect x="886" y="496" width="4" height="1" fill="#0000ff" />
<rect x="895" y="496" width="6" height="1" fill="#0000ff" />
<rect x="903" y="496" width="3" height="1" fill="#0000ff" />
<rect x="923" y="496" width="6" height="1" fill="#0000ff" />
<rect x="949" y="496" width="4" height="1" fill="#0000ff" />
<rect x="958" y="496" width="2" height="1" fill="#0000ff" />
<rect x="965" y="496" width="6" height="1" fill="#0000ff" />
<rect x="973" y="496" width="2" height="1" fill="#0000ff" />
<circle cx="147.5" cy="148.75" r="3.5" fill="#fff" stroke="#000" stroke-width="1"/>
<rect x="150.0" y="152.5" width="19.5" height="13.5" fill="#fff" />
<text x="152.5" y="163.5" font-size="12" fill="#000" textLength="15" lengthAdjust="spacingAndGlyphs" >22°</text>
<circle cx="101.9" cy="355" r="3.5" fill="#fff" stroke="#000" stroke-width="1"/>
<rect x="104.4" y="358.5" width="23.0" height="13.5" fill="#fff" />
<text x="106.9" y="369.5" font-size="12" fill="#000" textLength="18.5" lengthAdjust="spacingAndGlyphs" >-23°</text>
<circle cx="281.5" cy="362.2" r="3.5" fill="#fff" stroke="#000" stroke-width="1"/>
<rect x="283.9" y="366" width="26.0" height="13.5" fill="#fff" />
<text x="286.4" y="377" font-size="12" fill="#000" textLength="21.5" lengthAdjust="spacingAndGlyphs" >155°</text>
<circle cx="328.8" cy="146.7" r="3.5" fill="#fff" stroke="#000" stroke-width="1"/>
<rect x="331.1" y="150.8" width="26.0" height="13.5" fill="#fff" />
<text x="333.6" y="161.8" font-size="12" fill="#000" textLength="21.5" lengthAdjust="spacingAndGlyphs" >202°</text>
<circle cx="461.7" cy="362.6" r="3.5" fill="#fff" stroke="#000" stroke-width="1"/>
<rect x="464.4" y="366.2" width="26.0" height="13.5" fill="#fff" />
<text x="466.9" y="377.2" font-size="12" fill="#000" textLength="21.5" lengthAdjust="spacingAndGlyphs" >334°</text>
<circle cx="511.3" cy="140.4" r="3.5" fill="#fff" stroke="#000" stroke-width="1"/>
<rect x="512.9" y="144.8" width="24.0" height="13.5" fill="#fff" />
<text x="515.4" y="155.8" font-size="12" fill="#000" textLength="19.5" lengthAdjust="spacingAndGlyphs" >383°</text>
<circle cx="642.8" cy="364" r="3.5" fill="#fff" stroke="#000" stroke-width="1"/>
<rect x="644.5" y="368.4" width="26.0" height="13.5" fill="#fff" />
<text x="647" y="379.4" font-size="12" fill="#000" textLength="21.5" lengthAdjust="spacingAndGlyphs" >514°</text>
<circle cx="693.1" cy="134.6" r="3.5" fill="#fff" stroke="#000" stroke-width="1"/>
<rect x="694.5" y="138.8" width="26.0" height="13.5" fill="#fff" />
<text x="697" y="149.8" font-size="12" fill="#000" textLength="21.5" lengthAdjust="spacingAndGlyphs" >563°</text>
<path fill="none" stroke="#ff0000" stroke-width="2" stroke-linejoin="round" shape-rendering="crispEdges" d="M39.90 316.50 C40.05 317.73 40.55 321.52 40.80 323.90 C41.05 326.28 41.20 329.37 41.40 330.80 C41.60 332.23 41.43 332.13 42.00 332.50 C42.57 332.87 44.13 332.35 44.80 333.00 C45.47 333.65 45.62 334.30 46.00 336.40 C46.38 338.50 46.87 342.37 47.10 345.60 C47.33 348.83 47.12 353.82 47.40 355.80 C47.68 357.78 48.38 357.50 48.80 357.50 C49.22 357.50 49.52 357.22 49.90 355.80 C50.28 354.38 50.72 349.97 51.10 349.00 C51.48 348.03 51.82 348.30 52.20 350.00 C52.58 351.70 53.02 356.62 53.40 359.20 C53.78 361.78 54.03 364.37 54.50 365.50 C54.97 366.63 55.73 367.05 56.20 366.00 C56.67 364.95 56.92 360.33 57.30 359.20 C57.68 358.07 58.12 358.73 58.50 359.20 C58.88 359.67 59.17 360.00 59.60 362.00 C60.03 364.00 60.62 369.57 61.10 371.20 C61.58 372.83 62.05 373.52 62.50 371.80 C62.95 370.08 63.27 362.90 63.80 360.90 C64.33 358.90 65.07 359.42 65.70 359.80 C66.33 360.18 67.18 362.25 67.60 363.20 C68.02 364.15 67.88 366.53 68.20 365.50 C68.52 364.47 69.03 360.13 69.50 357.00 C69.97 353.87 70.47 348.90 71.00 346.70 C71.53 344.50 72.18 343.70 72.70 343.80 C73.22 343.90 73.62 347.10 74.10 347.30 C74.58 347.50 74.88 346.23 75.60 345.00 C76.32 343.77 77.65 340.10 78.40 339.90 C79.15 339.70 79.33 342.10 80.10 343.80 C80.87 345.50 82.13 348.70 83.00 350.10 C83.87 351.50 84.50 351.92 85.30 352.20 C86.10 352.48 86.85 352.43 87.80 351.80 C88.75 351.17 89.90 349.85 91.00 348.40 C92.10 346.95 93.27 344.15 94.40 343.10 C95.53 342.05 96.85 341.88 97.80 342.10 C98.75 342.32 99.43 343.07 100.10 344.40 C100.77 345.73 101.23 349.05 101.80 350.10 C102.37 351.15 102.65 351.45 103.50 350.70 C104.35 349.95 105.77 347.98 106.90 345.60 C108.03 343.22 109.55 339.07 110.30 336.40 C111.05 333.73 110.55 331.87 111.40 329.60 C112.25 327.33 114.53 324.88 115.40 322.80 C116.27 320.72 116.02 319.38 116.60 317.10 C117.18 314.82 117.95 311.95 118.90 309.10 C119.85 306.25 121.37 302.77 122.30 300.00 C123.23 297.23 123.22 298.17 124.50 292.50 C125.78 286.83 128.46 274.33 130.00 266.00 C131.54 257.67 132.50 251.83 133.75 242.50 C135.00 233.17 136.46 217.50 137.50 210.00 C138.54 202.50 138.96 203.75 140.00 197.50 C141.04 191.25 142.58 178.12 143.75 172.50 C144.92 166.88 145.75 163.96 147.00 163.75 C148.25 163.54 150.33 168.96 151.25 171.25 C152.17 173.54 151.88 171.88 152.50 177.50 C153.12 183.12 154.08 196.25 155.00 205.00 C155.92 213.75 156.75 223.33 158.00 230.00 C159.25 236.67 160.71 245.00 162.50 245.00 C164.29 245.00 167.08 233.12 168.75 230.00 C170.42 226.88 171.04 227.17 172.50 226.25 C173.96 225.33 176.04 225.46 177.50 224.50 C178.96 223.54 180.08 220.42 181.25 220.50 C182.42 220.58 183.79 223.00 184.50 225.00 C185.21 227.00 184.67 229.17 185.50 232.50 C186.33 235.83 188.54 239.58 189.50 245.00 C190.46 250.42 190.54 257.50 191.25 265.00 C191.96 272.50 192.92 282.08 193.75 290.00 C194.58 297.92 195.08 307.17 196.25 312.50 C197.42 317.83 199.29 322.83 200.75 322.00 C202.21 321.17 203.38 311.58 205.00 307.50 C206.62 303.42 208.83 297.92 210.50 297.50 C212.17 297.08 213.62 300.62 215.00 305.00 C216.38 309.38 217.29 318.96 218.75 323.75 C220.21 328.54 222.08 331.46 223.75 333.75 C225.42 336.04 227.38 334.38 228.75 337.50 C230.12 340.62 230.96 349.38 232.00 352.50 C233.04 355.62 233.67 353.00 235.00 356.25 C236.33 359.50 238.33 371.79 240.00 372.00 C241.67 372.21 243.12 362.21 245.00 357.50 C246.88 352.79 249.38 346.75 251.25 343.75 C253.12 340.75 254.38 339.08 256.25 339.50 C258.12 339.92 260.83 346.17 262.50 346.25 C264.17 346.33 264.58 341.25 266.25 340.00 C267.92 338.75 270.83 336.88 272.50 338.75 C274.17 340.62 275.00 348.62 276.25 351.25 C277.50 353.88 278.75 354.08 280.00 354.50 C281.25 354.92 282.68 356.95 283.75 353.75 C284.82 350.55 285.41 338.93 286.40 335.30 C287.39 331.68 288.33 334.72 289.70 332.00 C291.07 329.28 292.85 322.55 294.60 319.00 C296.35 315.45 298.83 315.63 300.20 310.70 C301.57 305.77 301.72 296.22 302.80 289.40 C303.88 282.58 305.33 277.45 306.70 269.80 C308.07 262.15 309.47 250.62 311.00 243.50 C312.53 236.38 314.80 232.93 315.90 227.10 C317.00 221.27 316.58 217.18 317.60 208.50 C318.62 199.82 320.68 183.08 322.00 175.00 C323.32 166.92 324.15 163.72 325.50 160.00 C326.85 156.28 328.93 153.03 330.10 152.70 C331.27 152.37 331.82 154.28 332.50 158.00 C333.18 161.72 333.28 166.58 334.20 175.00 C335.12 183.42 337.12 200.67 338.00 208.50 C338.88 216.33 338.53 216.98 339.50 222.00 C340.47 227.02 342.27 239.93 343.80 238.60 C345.33 237.27 346.90 219.85 348.70 214.00 C350.50 208.15 352.68 202.95 354.60 203.50 C356.52 204.05 358.45 213.37 360.20 217.30 C361.95 221.23 363.47 221.08 365.10 227.10 C366.73 233.12 368.37 243.57 370.00 253.40 C371.63 263.23 372.98 277.25 374.90 286.10 C376.82 294.95 379.58 304.30 381.50 306.50 C383.42 308.70 384.65 303.07 386.40 299.30 C388.15 295.53 390.37 285.00 392.00 283.90 C393.63 282.80 394.68 287.40 396.20 292.70 C397.72 298.00 399.73 309.15 401.10 315.70 C402.47 322.25 402.75 328.18 404.40 332.00 C406.05 335.82 409.08 335.58 411.00 338.60 C412.92 341.62 414.27 346.55 415.90 350.10 C417.53 353.65 419.43 358.53 420.80 359.90 C422.17 361.27 422.45 361.85 424.10 358.30 C425.75 354.75 428.95 342.70 430.70 338.60 C432.45 334.50 432.97 332.88 434.60 333.70 C436.23 334.52 438.70 340.22 440.50 343.50 C442.30 346.78 444.03 353.40 445.40 353.40 C446.77 353.40 447.07 345.15 448.70 343.50 C450.33 341.85 453.28 342.68 455.20 343.50 C457.12 344.32 458.83 347.58 460.20 348.40 C461.57 349.22 461.92 351.15 463.40 348.40 C464.88 345.65 467.53 338.55 469.10 331.90 C470.67 325.25 471.75 312.08 472.80 308.50 C473.85 304.92 474.17 311.45 475.40 310.40 C476.63 309.35 478.67 306.03 480.20 302.20 C481.73 298.37 483.37 291.42 484.60 287.40 C485.83 283.38 486.85 281.80 487.60 278.10 C488.35 274.40 487.87 270.43 489.10 265.20 C490.33 259.97 493.40 253.80 495.00 246.70 C496.60 239.60 497.35 232.17 498.70 222.60 C500.05 213.03 501.43 200.10 503.10 189.30 C504.77 178.50 507.27 163.98 508.70 157.80 C510.13 151.62 510.47 150.35 511.70 152.20 C512.93 154.05 514.57 159.33 516.10 168.90 C517.63 178.47 519.35 198.30 520.90 209.60 C522.45 220.90 524.03 234.53 525.40 236.70 C526.77 238.87 527.75 225.57 529.10 222.60 C530.45 219.63 531.53 221.07 533.50 218.90 C535.47 216.73 538.87 209.92 540.90 209.60 C542.93 209.28 544.08 213.60 545.70 217.00 C547.32 220.40 549.05 221.05 550.60 230.00 C552.15 238.95 553.53 258.97 555.00 270.70 C556.47 282.43 557.98 292.68 559.40 300.40 C560.82 308.12 562.07 316.08 563.50 317.00 C564.93 317.92 566.45 310.40 568.00 305.90 C569.55 301.40 571.27 291.23 572.80 290.00 C574.33 288.77 575.53 292.45 577.20 298.50 C578.87 304.55 580.95 320.43 582.80 326.30 C584.65 332.17 586.15 329.07 588.30 333.70 C590.45 338.33 593.35 347.93 595.70 354.10 C598.05 360.27 600.23 370.08 602.40 370.70 C604.57 371.32 606.42 362.42 608.70 357.80 C610.98 353.18 613.63 344.12 616.10 343.00 C618.57 341.88 621.33 350.80 623.50 351.10 C625.67 351.40 627.25 345.97 629.10 344.80 C630.95 343.63 632.75 342.25 634.60 344.10 C636.45 345.95 638.33 354.02 640.20 355.90 C642.07 357.78 644.23 357.53 645.80 355.40 C647.37 353.27 647.68 347.72 649.60 343.10 C651.52 338.48 654.93 334.12 657.30 327.70 C659.67 321.28 662.20 311.02 663.80 304.60 C665.40 298.18 665.87 294.65 666.90 289.20 C667.93 283.75 668.58 277.35 670.00 271.90 C671.42 266.45 673.87 263.23 675.40 256.50 C676.93 249.77 677.73 242.07 679.20 231.50 C680.67 220.93 682.40 203.67 684.20 193.10 C686.00 182.53 688.40 173.37 690.00 168.10 C691.60 162.83 692.38 160.22 693.80 161.50 C695.22 162.78 696.88 164.13 698.50 175.80 C700.12 187.47 702.03 220.93 703.50 231.50 C704.97 242.07 706.02 239.20 707.30 239.20 C708.58 239.20 709.92 235.47 711.20 231.50 C712.48 227.53 713.53 218.28 715.00 215.40 C716.47 212.52 718.53 211.52 720.00 214.20 C721.47 216.88 722.27 226.05 723.80 231.50 C725.33 236.95 727.65 241.12 729.20 246.90 C730.75 252.68 731.43 259.15 733.10 266.20 C734.77 273.25 737.28 281.20 739.20 289.20 C741.12 297.20 742.87 310.98 744.60 314.20 C746.33 317.42 747.80 311.70 749.60 308.50 C751.40 305.30 753.67 295.00 755.40 295.00 C757.13 295.00 758.60 304.65 760.00 308.50 C761.40 312.35 762.33 312.33 763.80 318.10 C765.27 323.87 767.00 338.17 768.80 343.10 C770.60 348.03 772.22 344.50 774.60 347.70 C776.98 350.90 780.85 359.55 783.10 362.30 C785.35 365.05 785.67 368.17 788.10 364.20 C790.53 360.23 794.30 340.10 797.70 338.50 C801.10 336.90 805.17 353.97 808.50 354.60 C811.83 355.23 814.63 342.62 817.70 342.30 C820.77 341.98 824.72 352.57 826.90 352.70 C829.08 352.83 829.38 347.58 830.80 343.10 C832.22 338.62 833.67 330.28 835.40 325.80 C837.13 321.32 839.40 319.73 841.20 316.20 C843.00 312.67 844.60 308.13 846.20 304.60 C847.80 301.07 849.40 300.13 850.80 295.00 C852.20 289.87 853.32 282.45 854.60 273.80 C855.88 265.15 857.08 251.10 858.50 243.10 C859.92 235.10 861.50 234.78 863.10 225.80 C864.70 216.82 866.43 200.10 868.10 189.20 C869.77 178.30 871.50 164.23 873.10 160.40 C874.70 156.57 875.97 156.90 877.70 166.20 C879.43 175.50 881.58 203.90 883.50 216.20 C885.42 228.50 887.60 237.77 889.20 240.00 C890.80 242.23 891.50 233.07 893.10 229.60 C894.70 226.13 896.88 220.48 898.80 219.20 C900.72 217.92 902.67 219.97 904.60 221.90 C906.53 223.83 908.60 228.55 910.40 230.80 C912.20 233.05 913.67 226.30 915.40 235.40 C917.13 244.50 918.88 270.98 920.80 285.40 C922.72 299.82 925.12 318.05 926.90 321.90 C928.68 325.75 929.57 313.30 931.50 308.50 C933.43 303.70 936.45 292.47 938.50 293.10 C940.55 293.73 941.75 304.93 943.80 312.30 C945.85 319.67 948.68 332.68 950.80 337.30 C952.92 341.92 954.45 335.97 956.50 340.00 C958.55 344.03 960.85 357.02 963.10 361.50 C965.35 365.98 967.57 370.62 970.00 366.90 C972.43 363.18 975.78 343.68 977.70 339.20 C979.62 334.72 980.53 339.03 981.50 340.00 C982.47 340.97 982.85 344.80 983.50 345.00 C984.15 345.20 985.08 341.83 985.40 341.20"/>
<rect x="23.5" y="80.5" width="7" height="7" fill="#fff" stroke="#000" stroke-width="1" shape-rendering="crispEdges"/>
<rect x="447.5" y="80.5" width="7" height="7" fill="#fff" stroke="#000" stroke-width="1" shape-rendering="crispEdges"/>
<rect x="871.5" y="80.5" width="7" height="7" fill="#fff" stroke="#000" stroke-width="1" shape-rendering="crispEdges"/>
<rect x="23.5" y="276.5" width="7" height="7" fill="#fff" stroke="#000" stroke-width="1" shape-rendering="crispEdges"/>
<rect x="871.5" y="276.5" width="7" height="7" fill="#fff" stroke="#000" stroke-width="1" shape-rendering="crispEdges"/>
<rect x="23.5" y="472.5" width="7" height="7" fill="#fff" stroke="#000" stroke-width="1" shape-rendering="crispEdges"/>
<rect x="447.5" y="472.5" width="7" height="7" fill="#fff" stroke="#000" stroke-width="1" shape-rendering="crispEdges"/>
<rect x="871.5" y="472.5" width="7" height="7" fill="#fff" stroke="#000" stroke-width="1" shape-rendering="crispEdges"/>
<rect x="32" y="285" width="2" height="7" fill="#ff0000" />
<path d="M35 286l4 2.5l-4 2.5z" fill="#ff0000"/>
<path d="M986 497.5l6 -4v8z" fill="#0000ff"/>
<text x="9.5" y="540" font-size="11" fill="#1f56a8" textLength="13.5" lengthAdjust="spacingAndGlyphs" >мс</text>
</g>
<rect x="7.5" y="542.5" width="13" height="15" rx="3" fill="url(#gBt)" stroke="#8a8a8a"/>
<rect x="11" y="552" width="2" height="2" fill="#0000ff" />
<rect x="14" y="552" width="2" height="2" fill="#0000ff" />
<rect x="22.5" y="542.5" width="13" height="15" rx="3" fill="url(#gBt)" stroke="#8a8a8a"/>
<rect x="26" y="552" width="2" height="2" fill="#ff0000" />
<rect x="29" y="552" width="2" height="2" fill="#ff0000" />
<rect x="39" y="542" width="16" height="16" fill="#d4d0c8" />
<rect x="39" y="542" width="16" height="1" fill="#fff" />
<rect x="39" y="542" width="1" height="16" fill="#fff" />
<rect x="39" y="557" width="16" height="1" fill="#404040" />
<rect x="54" y="542" width="1" height="16" fill="#404040" />
<path d="M48 546v7l-4 -3.5z" fill="#000"/>
<rect x="55" y="542" width="914" height="16" fill="#d4d0c8" />
<rect x="55" y="542" width="914" height="1" fill="#fff" />
<rect x="55" y="542" width="1" height="16" fill="#fff" />
<rect x="55" y="557" width="914" height="1" fill="#404040" />
<rect x="968" y="542" width="1" height="16" fill="#404040" />
<rect x="969" y="542" width="16" height="16" fill="#d4d0c8" />
<rect x="969" y="542" width="16" height="1" fill="#fff" />
<rect x="969" y="542" width="1" height="16" fill="#fff" />
<rect x="969" y="557" width="16" height="1" fill="#404040" />
<rect x="984" y="542" width="1" height="16" fill="#404040" />
<path d="M976 546v7l4 -3.5z" fill="#000"/>
<rect x="512.5" y="561.5" width="18" height="7" rx="4" fill="url(#gBt)" stroke="#8a8a8a"/>
<path d="M518.5 564h6l-3 3z" fill="#000"/>
<rect x="4" y="576" width="1016" height="1" fill="#808080" />
<rect x="4" y="679" width="1016" height="1" fill="#808080" />
<rect x="4" y="576" width="1" height="104" fill="#808080" />
<rect x="0" y="683" width="1024" height="1" fill="#404040" />
<rect x="0" y="686" width="1023" height="1" fill="#808080" />
<rect x="0" y="686" width="1" height="15" fill="#808080" />
<rect x="0" y="701" width="1024" height="1" fill="#ffffff" />
<rect x="1023" y="686" width="1" height="16" fill="#ffffff" />
<rect x="9" y="584" width="3" height="1" fill="#505050" />
<rect x="9" y="586" width="3" height="1" fill="#505050" />
<rect x="9" y="588" width="3" height="1" fill="#505050" />
<rect x="9" y="590" width="3" height="1" fill="#505050" />
<rect x="9" y="592" width="3" height="1" fill="#505050" />
<rect x="9" y="594" width="3" height="1" fill="#505050" />
<rect x="9" y="596" width="3" height="1" fill="#505050" />
<rect x="9" y="598" width="3" height="1" fill="#505050" />
<rect x="9" y="600" width="3" height="1" fill="#505050" />
<rect x="9" y="602" width="3" height="1" fill="#505050" />
<rect x="9" y="604" width="3" height="1" fill="#505050" />
<rect x="9" y="606" width="3" height="1" fill="#505050" />
<rect x="9" y="608" width="3" height="1" fill="#505050" />
<rect x="9" y="610" width="3" height="1" fill="#505050" />
<rect x="9" y="612" width="3" height="1" fill="#505050" />
<rect x="9" y="614" width="3" height="1" fill="#505050" />
<rect x="9" y="616" width="3" height="1" fill="#505050" />
<rect x="9" y="618" width="3" height="1" fill="#505050" />
<rect x="9" y="620" width="3" height="1" fill="#505050" />
<rect x="9" y="622" width="3" height="1" fill="#505050" />
<rect x="9" y="624" width="3" height="1" fill="#505050" />
<rect x="9" y="626" width="3" height="1" fill="#505050" />
<rect x="9" y="628" width="3" height="1" fill="#505050" />
<rect x="9" y="630" width="3" height="1" fill="#505050" />
<rect x="9" y="632" width="3" height="1" fill="#505050" />
<rect x="9" y="634" width="3" height="1" fill="#505050" />
<rect x="9" y="636" width="3" height="1" fill="#505050" />
<rect x="9" y="638" width="3" height="1" fill="#505050" />
<rect x="9" y="640" width="3" height="1" fill="#505050" />
<rect x="9" y="642" width="3" height="1" fill="#505050" />
<rect x="9" y="644" width="3" height="1" fill="#505050" />
<rect x="9" y="646" width="3" height="1" fill="#505050" />
<rect x="9" y="648" width="3" height="1" fill="#505050" />
<rect x="9" y="650" width="3" height="1" fill="#505050" />
<rect x="9" y="652" width="3" height="1" fill="#505050" />
<rect x="9" y="654" width="3" height="1" fill="#505050" />
<rect x="9" y="656" width="3" height="1" fill="#505050" />
<rect x="9" y="658" width="3" height="1" fill="#505050" />
<rect x="9" y="660" width="3" height="1" fill="#505050" />
<rect x="9" y="662" width="3" height="1" fill="#505050" />
<rect x="9" y="664" width="3" height="1" fill="#505050" />
<rect x="9" y="666" width="3" height="1" fill="#505050" />
<rect x="9" y="668" width="3" height="1" fill="#505050" />
<rect x="9" y="670" width="3" height="1" fill="#505050" />
<rect x="9" y="672" width="3" height="1" fill="#505050" />
<rect x="323" y="584" width="3" height="1" fill="#303030" />
<rect x="323" y="586" width="3" height="1" fill="#303030" />
<rect x="323" y="588" width="3" height="1" fill="#303030" />
<rect x="323" y="590" width="3" height="1" fill="#303030" />
<rect x="323" y="592" width="3" height="1" fill="#303030" />
<rect x="323" y="594" width="3" height="1" fill="#303030" />
<rect x="323" y="596" width="3" height="1" fill="#303030" />
<rect x="323" y="598" width="3" height="1" fill="#303030" />
<rect x="323" y="600" width="3" height="1" fill="#303030" />
<rect x="323" y="602" width="3" height="1" fill="#303030" />
<rect x="323" y="604" width="3" height="1" fill="#303030" />
<rect x="323" y="606" width="3" height="1" fill="#303030" />
<rect x="323" y="608" width="3" height="1" fill="#303030" />
<rect x="323" y="610" width="3" height="1" fill="#303030" />
<rect x="323" y="612" width="3" height="1" fill="#303030" />
<rect x="323" y="614" width="3" height="1" fill="#303030" />
<rect x="323" y="616" width="3" height="1" fill="#303030" />
<rect x="323" y="618" width="3" height="1" fill="#303030" />
<rect x="323" y="620" width="3" height="1" fill="#303030" />
<rect x="323" y="622" width="3" height="1" fill="#303030" />
<rect x="323" y="624" width="3" height="1" fill="#303030" />
<rect x="323" y="626" width="3" height="1" fill="#303030" />
<rect x="323" y="628" width="3" height="1" fill="#303030" />
<rect x="323" y="630" width="3" height="1" fill="#303030" />
<rect x="323" y="632" width="3" height="1" fill="#303030" />
<rect x="323" y="634" width="3" height="1" fill="#303030" />
<rect x="323" y="636" width="3" height="1" fill="#303030" />
<rect x="323" y="638" width="3" height="1" fill="#303030" />
<rect x="323" y="640" width="3" height="1" fill="#303030" />
<rect x="323" y="642" width="3" height="1" fill="#303030" />
<rect x="323" y="644" width="3" height="1" fill="#303030" />
<rect x="323" y="646" width="3" height="1" fill="#303030" />
<rect x="323" y="648" width="3" height="1" fill="#303030" />
<rect x="323" y="650" width="3" height="1" fill="#303030" />
<rect x="323" y="652" width="3" height="1" fill="#303030" />
<rect x="323" y="654" width="3" height="1" fill="#303030" />
<rect x="323" y="656" width="3" height="1" fill="#303030" />
<rect x="323" y="658" width="3" height="1" fill="#303030" />
<rect x="323" y="660" width="3" height="1" fill="#303030" />
<rect x="323" y="662" width="3" height="1" fill="#303030" />
<rect x="323" y="664" width="3" height="1" fill="#303030" />
<rect x="323" y="666" width="3" height="1" fill="#303030" />
<rect x="323" y="668" width="3" height="1" fill="#303030" />
<rect x="323" y="670" width="3" height="1" fill="#303030" />
<rect x="323" y="672" width="3" height="1" fill="#303030" />
<rect x="17.5" y="587.5" width="95" height="88" fill="none" stroke="#9c9a94"/>
<rect x="25" y="581" width="84" height="10" fill="#d4d0c8" />
<text x="27" y="591" font-size="12" fill="#ff0000" font-weight="bold" textLength="80" lengthAdjust="spacingAndGlyphs" >Канал A (В/э)</text>
<rect x="114.5" y="587.5" width="95" height="88" fill="none" stroke="#9c9a94"/>
<rect x="122" y="581" width="84" height="10" fill="#d4d0c8" />
<text x="124" y="591" font-size="12" fill="#0000ff" font-weight="bold" textLength="80" lengthAdjust="spacingAndGlyphs" >Канал B (В/э)</text>
<rect x="211.5" y="587.5" width="106" height="88" fill="none" stroke="#9c9a94"/>
<rect x="218.5" y="581" width="47" height="10" fill="#d4d0c8" />
<text x="220.5" y="591" font-size="12" fill="#006000" font-weight="bold" textLength="43" lengthAdjust="spacingAndGlyphs" >Период</text>
<rect x="331.5" y="587.5" width="101" height="88" fill="none" stroke="#9c9a94"/>
<rect x="338.5" y="581" width="94.5" height="10" fill="#d4d0c8" />
<text x="340.5" y="591" font-size="12" fill="#000" font-weight="bold" textLength="90.5" lengthAdjust="spacingAndGlyphs" >Синхронизация</text>
<rect x="436.5" y="588.5" width="283" height="40" fill="none" stroke="#9c9a94"/>
<rect x="443" y="582" width="220.5" height="10" fill="#d4d0c8" />
<text x="445" y="592" font-size="12" fill="#000" font-weight="bold" textLength="216.5" lengthAdjust="spacingAndGlyphs" >Параметры сигнала под маркерами</text>
<rect x="436.5" y="638.5" width="172" height="37" fill="none" stroke="#9c9a94"/>
<rect x="443" y="632" width="166" height="10" fill="#d4d0c8" />
<text x="445" y="642" font-size="12" fill="#000" font-weight="bold" textLength="162" lengthAdjust="spacingAndGlyphs" >Общие параметры сигнала</text>
<rect x="610.5" y="638.5" width="177" height="37" fill="none" stroke="#9c9a94"/>
<rect x="618" y="632" width="75" height="10" fill="#d4d0c8" />
<text x="620" y="642" font-size="12" fill="#000" font-weight="bold" textLength="71" lengthAdjust="spacingAndGlyphs" >Управление</text>
<rect x="722.5" y="588.5" width="65" height="40" fill="none" stroke="#9c9a94"/>
<rect x="729.5" y="582" width="50" height="10" fill="#d4d0c8" />
<text x="731.5" y="592" font-size="12" fill="#000" font-weight="bold" textLength="46" lengthAdjust="spacingAndGlyphs" >Фильтр</text>
<defs><linearGradient id="gKnobL" x1="0.15" y1="0.1" x2="0.85" y2="0.9"><stop offset="0" stop-color="#f0f0f0"/><stop offset="1" stop-color="#8a8a8a"/></linearGradient></defs>
<line x1="81.5" y1="637.7" x2="83.8" y2="639.7" stroke="#a9a69f" stroke-width="1"/>
<line x1="83.1" y1="635.5" x2="85.6" y2="637.1" stroke="#a9a69f" stroke-width="1"/>
<line x1="84.4" y1="633.1" x2="87.1" y2="634.3" stroke="#a9a69f" stroke-width="1"/>
<line x1="85.3" y1="630.5" x2="88.2" y2="631.3" stroke="#a9a69f" stroke-width="1"/>
<line x1="85.9" y1="627.8" x2="88.9" y2="628.2" stroke="#a9a69f" stroke-width="1"/>
<line x1="86.1" y1="625.0" x2="89.1" y2="625.0" stroke="#a9a69f" stroke-width="1"/>
<line x1="85.9" y1="622.2" x2="88.9" y2="621.8" stroke="#a9a69f" stroke-width="1"/>
<line x1="85.3" y1="619.5" x2="88.2" y2="618.7" stroke="#a9a69f" stroke-width="1"/>
<line x1="84.4" y1="616.9" x2="87.1" y2="615.7" stroke="#a9a69f" stroke-width="1"/>
<line x1="83.1" y1="614.5" x2="85.6" y2="612.9" stroke="#a9a69f" stroke-width="1"/>
<line x1="81.5" y1="612.3" x2="83.8" y2="610.3" stroke="#a9a69f" stroke-width="1"/>
<line x1="79.5" y1="610.3" x2="81.6" y2="608.1" stroke="#a9a69f" stroke-width="1"/>
<line x1="77.4" y1="608.6" x2="79.0" y2="606.1" stroke="#a9a69f" stroke-width="1"/>
<line x1="75.0" y1="607.2" x2="76.3" y2="604.5" stroke="#a9a69f" stroke-width="1"/>
<line x1="72.4" y1="606.2" x2="73.3" y2="603.3" stroke="#a9a69f" stroke-width="1"/>
<line x1="69.7" y1="605.5" x2="70.3" y2="602.5" stroke="#a9a69f" stroke-width="1"/>
<line x1="67.0" y1="605.2" x2="67.1" y2="602.2" stroke="#a9a69f" stroke-width="1"/>
<line x1="64.2" y1="605.3" x2="63.9" y2="602.3" stroke="#a9a69f" stroke-width="1"/>
<line x1="61.5" y1="605.8" x2="60.8" y2="602.9" stroke="#a9a69f" stroke-width="1"/>
<line x1="58.9" y1="606.6" x2="57.8" y2="603.9" stroke="#a9a69f" stroke-width="1"/>
<line x1="56.4" y1="607.9" x2="54.9" y2="605.3" stroke="#a9a69f" stroke-width="1"/>
<line x1="54.1" y1="609.4" x2="52.3" y2="607.0" stroke="#a9a69f" stroke-width="1"/>
<line x1="52.1" y1="611.2" x2="49.9" y2="609.2" stroke="#a9a69f" stroke-width="1"/>
<line x1="50.3" y1="613.4" x2="47.9" y2="611.6" stroke="#a9a69f" stroke-width="1"/>
<line x1="48.8" y1="615.7" x2="46.2" y2="614.3" stroke="#a9a69f" stroke-width="1"/>
<line x1="47.7" y1="618.2" x2="44.9" y2="617.2" stroke="#a9a69f" stroke-width="1"/>
<line x1="46.9" y1="620.9" x2="44.0" y2="620.3" stroke="#a9a69f" stroke-width="1"/>
<line x1="46.5" y1="623.6" x2="43.6" y2="623.4" stroke="#a9a69f" stroke-width="1"/>
<line x1="46.5" y1="626.4" x2="43.6" y2="626.6" stroke="#a9a69f" stroke-width="1"/>
<line x1="46.9" y1="629.1" x2="44.0" y2="629.7" stroke="#a9a69f" stroke-width="1"/>
<line x1="47.7" y1="631.8" x2="44.9" y2="632.8" stroke="#a9a69f" stroke-width="1"/>
<line x1="48.8" y1="634.3" x2="46.2" y2="635.7" stroke="#a9a69f" stroke-width="1"/>
<line x1="50.3" y1="636.6" x2="47.9" y2="638.4" stroke="#a9a69f" stroke-width="1"/>
<circle cx="66.3" cy="625" r="18.3" fill="url(#gKnobL)"/>
<circle cx="66.3" cy="625" r="12" fill="#d8d5ce"/>
<line x1="62.8" y1="605.0" x2="61.7" y2="599.1" stroke="#000" stroke-width="1"/>
<text x="63" y="601" font-size="9" fill="#000" textLength="11" lengthAdjust="spacingAndGlyphs" >5В</text>
<line x1="50.7" y1="612.0" x2="46.2" y2="608.1" stroke="#000" stroke-width="1"/>
<text x="36.5" y="612" font-size="9" fill="#000" textLength="9.5" lengthAdjust="spacingAndGlyphs" >1В</text>
<line x1="79.3" y1="609.4" x2="83.2" y2="604.9" stroke="#000" stroke-width="1"/>
<text x="83" y="609" font-size="9" fill="#000" textLength="15" lengthAdjust="spacingAndGlyphs" >10В</text>
<line x1="46.0" y1="625.0" x2="40.0" y2="625.0" stroke="#000" stroke-width="1"/>
<text x="21" y="630" font-size="9" fill="#000" textLength="19" lengthAdjust="spacingAndGlyphs" >0,5В</text>
<line x1="86.3" y1="621.5" x2="92.2" y2="620.4" stroke="#000" stroke-width="1"/>
<text x="93" y="624" font-size="9" fill="#000" textLength="14" lengthAdjust="spacingAndGlyphs" >15В</text>
<line x1="50.7" y1="638.0" x2="46.2" y2="641.9" stroke="#000" stroke-width="1"/>
<text x="25" y="645" font-size="9" fill="#000" textLength="18" lengthAdjust="spacingAndGlyphs" >0,1В</text>
<line x1="81.9" y1="638.0" x2="86.4" y2="641.9" stroke="#000" stroke-width="1"/>
<text x="88" y="645" font-size="9" fill="#000" textLength="15" lengthAdjust="spacingAndGlyphs" >20В</text>
<path d="M56.5 609.9l5 2.5l-5 2.5z" fill="#ff0000" transform="rotate(-120.0 59.0 612.4)"/>
<text x="66.3" y="628.5" font-size="10" fill="#ff0000" font-weight="bold" textLength="10.5" lengthAdjust="spacingAndGlyphs" text-anchor="middle" >4В</text>
<line x1="178.5" y1="637.7" x2="180.8" y2="639.7" stroke="#a9a69f" stroke-width="1"/>
<line x1="180.1" y1="635.5" x2="182.6" y2="637.1" stroke="#a9a69f" stroke-width="1"/>
<line x1="181.4" y1="633.1" x2="184.1" y2="634.3" stroke="#a9a69f" stroke-width="1"/>
<line x1="182.3" y1="630.5" x2="185.2" y2="631.3" stroke="#a9a69f" stroke-width="1"/>
<line x1="182.9" y1="627.8" x2="185.9" y2="628.2" stroke="#a9a69f" stroke-width="1"/>
<line x1="183.1" y1="625.0" x2="186.1" y2="625.0" stroke="#a9a69f" stroke-width="1"/>
<line x1="182.9" y1="622.2" x2="185.9" y2="621.8" stroke="#a9a69f" stroke-width="1"/>
<line x1="182.3" y1="619.5" x2="185.2" y2="618.7" stroke="#a9a69f" stroke-width="1"/>
<line x1="181.4" y1="616.9" x2="184.1" y2="615.7" stroke="#a9a69f" stroke-width="1"/>
<line x1="180.1" y1="614.5" x2="182.6" y2="612.9" stroke="#a9a69f" stroke-width="1"/>
<line x1="178.5" y1="612.3" x2="180.8" y2="610.3" stroke="#a9a69f" stroke-width="1"/>
<line x1="176.5" y1="610.3" x2="178.6" y2="608.1" stroke="#a9a69f" stroke-width="1"/>
<line x1="174.4" y1="608.6" x2="176.0" y2="606.1" stroke="#a9a69f" stroke-width="1"/>
<line x1="172.0" y1="607.2" x2="173.3" y2="604.5" stroke="#a9a69f" stroke-width="1"/>
<line x1="169.4" y1="606.2" x2="170.3" y2="603.3" stroke="#a9a69f" stroke-width="1"/>
<line x1="166.7" y1="605.5" x2="167.3" y2="602.5" stroke="#a9a69f" stroke-width="1"/>
<line x1="164.0" y1="605.2" x2="164.1" y2="602.2" stroke="#a9a69f" stroke-width="1"/>
<line x1="161.2" y1="605.3" x2="160.9" y2="602.3" stroke="#a9a69f" stroke-width="1"/>
<line x1="158.5" y1="605.8" x2="157.8" y2="602.9" stroke="#a9a69f" stroke-width="1"/>
<line x1="155.9" y1="606.6" x2="154.8" y2="603.9" stroke="#a9a69f" stroke-width="1"/>
<line x1="153.4" y1="607.9" x2="151.9" y2="605.3" stroke="#a9a69f" stroke-width="1"/>
<line x1="151.1" y1="609.4" x2="149.3" y2="607.0" stroke="#a9a69f" stroke-width="1"/>
<line x1="149.1" y1="611.2" x2="146.9" y2="609.2" stroke="#a9a69f" stroke-width="1"/>
<line x1="147.3" y1="613.4" x2="144.9" y2="611.6" stroke="#a9a69f" stroke-width="1"/>
<line x1="145.8" y1="615.7" x2="143.2" y2="614.3" stroke="#a9a69f" stroke-width="1"/>
<line x1="144.7" y1="618.2" x2="141.9" y2="617.2" stroke="#a9a69f" stroke-width="1"/>
<line x1="143.9" y1="620.9" x2="141.0" y2="620.3" stroke="#a9a69f" stroke-width="1"/>
<line x1="143.5" y1="623.6" x2="140.6" y2="623.4" stroke="#a9a69f" stroke-width="1"/>
<line x1="143.5" y1="626.4" x2="140.6" y2="626.6" stroke="#a9a69f" stroke-width="1"/>
<line x1="143.9" y1="629.1" x2="141.0" y2="629.7" stroke="#a9a69f" stroke-width="1"/>
<line x1="144.7" y1="631.8" x2="141.9" y2="632.8" stroke="#a9a69f" stroke-width="1"/>
<line x1="145.8" y1="634.3" x2="143.2" y2="635.7" stroke="#a9a69f" stroke-width="1"/>
<line x1="147.3" y1="636.6" x2="144.9" y2="638.4" stroke="#a9a69f" stroke-width="1"/>
<circle cx="163.3" cy="625" r="18.3" fill="url(#gKnobL)"/>
<circle cx="163.3" cy="625" r="12" fill="#d8d5ce"/>
<line x1="159.8" y1="605.0" x2="158.7" y2="599.1" stroke="#000" stroke-width="1"/>
<text x="160" y="601" font-size="9" fill="#000" textLength="11" lengthAdjust="spacingAndGlyphs" >5В</text>
<line x1="147.7" y1="612.0" x2="143.2" y2="608.1" stroke="#000" stroke-width="1"/>
<text x="133.5" y="612" font-size="9" fill="#000" textLength="9.5" lengthAdjust="spacingAndGlyphs" >1В</text>
<line x1="176.3" y1="609.4" x2="180.2" y2="604.9" stroke="#000" stroke-width="1"/>
<text x="180" y="609" font-size="9" fill="#000" textLength="15" lengthAdjust="spacingAndGlyphs" >10В</text>
<line x1="143.0" y1="625.0" x2="137.0" y2="625.0" stroke="#000" stroke-width="1"/>
<text x="118" y="630" font-size="9" fill="#000" textLength="19" lengthAdjust="spacingAndGlyphs" >0,5В</text>
<line x1="183.3" y1="621.5" x2="189.2" y2="620.4" stroke="#000" stroke-width="1"/>
<text x="190" y="624" font-size="9" fill="#000" textLength="14" lengthAdjust="spacingAndGlyphs" >15В</text>
<line x1="147.7" y1="638.0" x2="143.2" y2="641.9" stroke="#000" stroke-width="1"/>
<text x="122" y="645" font-size="9" fill="#000" textLength="18" lengthAdjust="spacingAndGlyphs" >0,1В</text>
<line x1="178.9" y1="638.0" x2="183.4" y2="641.9" stroke="#000" stroke-width="1"/>
<text x="185" y="645" font-size="9" fill="#000" textLength="15" lengthAdjust="spacingAndGlyphs" >20В</text>
<path d="M170.1 633.6l5 2.5l-5 2.5z" fill="#0000ff" transform="rotate(50.0 172.6 636.1)"/>
<text x="163.3" y="628.5" font-size="10" fill="#0000ff" font-weight="bold" textLength="15" lengthAdjust="spacingAndGlyphs" text-anchor="middle" >20В</text>
<rect x="20.5" y="592.5" width="13" height="13" rx="3" fill="#efeee9" stroke="#808080"/>
<text x="22.5" y="602" font-size="9.5" fill="#000" font-weight="bold" textLength="5.5" lengthAdjust="spacingAndGlyphs" >A</text>
<path d="M29.5 596v5" stroke="#000" stroke-width="1"/><path d="M27.5 596.5h4l-2 -2.5z M27.5 600.5h4l-2 2.5z" fill="#000"/>
<rect x="20.5" y="607.5" width="13" height="13" rx="3" fill="#e6e4de" stroke="#909090"/>
<text x="22.5" y="617" font-size="9.5" fill="#8a8a9c" font-weight="bold" textLength="5.5" lengthAdjust="spacingAndGlyphs" >A</text>
<rect x="28.5" y="609.5" width="2.5" height="2.5" fill="none" stroke="#8a8a9c" stroke-width="1"/><path d="M29.8 613v3" stroke="#8a8a9c" stroke-width="1"/><path d="M27.8 615.5h4l-2 2.5z" fill="#8a8a9c"/>
<rect x="117.5" y="592.5" width="13" height="13" rx="3" fill="#efeee9" stroke="#808080"/>
<text x="119.5" y="602" font-size="9.5" fill="#000" font-weight="bold" textLength="5.5" lengthAdjust="spacingAndGlyphs" >A</text>
<path d="M126.5 596v5" stroke="#000" stroke-width="1"/><path d="M124.5 596.5h4l-2 -2.5z M124.5 600.5h4l-2 2.5z" fill="#000"/>
<rect x="117.5" y="607.5" width="13" height="13" rx="3" fill="#e6e4de" stroke="#909090"/>
<text x="119.5" y="617" font-size="9.5" fill="#8a8a9c" font-weight="bold" textLength="5.5" lengthAdjust="spacingAndGlyphs" >A</text>
<rect x="125.5" y="609.5" width="2.5" height="2.5" fill="none" stroke="#8a8a9c" stroke-width="1"/><path d="M126.8 613v3" stroke="#8a8a9c" stroke-width="1"/><path d="M124.8 615.5h4l-2 2.5z" fill="#8a8a9c"/>
<rect x="22" y="653" width="85" height="17" rx="2" fill="url(#gOr)" stroke="#808080" stroke-width="2"/>
<text x="64.5" y="666" font-size="11" fill="#ff0000" textLength="45" lengthAdjust="spacingAndGlyphs" text-anchor="middle" >Включен</text>
<rect x="119" y="653" width="85" height="17" rx="2" fill="url(#gBl)" stroke="#808080" stroke-width="2"/>
<text x="161.5" y="666" font-size="11" fill="#0000ff" textLength="45" lengthAdjust="spacingAndGlyphs" text-anchor="middle" >Включен</text>
<line x1="277.4" y1="641.5" x2="279.7" y2="643.4" stroke="#a9a69f" stroke-width="1"/>
<line x1="279.0" y1="639.4" x2="281.5" y2="641.1" stroke="#a9a69f" stroke-width="1"/>
<line x1="280.2" y1="637.2" x2="282.9" y2="638.6" stroke="#a9a69f" stroke-width="1"/>
<line x1="281.3" y1="634.9" x2="284.1" y2="635.9" stroke="#a9a69f" stroke-width="1"/>
<line x1="282.0" y1="632.4" x2="284.9" y2="633.2" stroke="#a9a69f" stroke-width="1"/>
<line x1="282.5" y1="629.9" x2="285.5" y2="630.3" stroke="#a9a69f" stroke-width="1"/>
<line x1="282.7" y1="627.4" x2="285.7" y2="627.4" stroke="#a9a69f" stroke-width="1"/>
<line x1="282.6" y1="624.8" x2="285.6" y2="624.6" stroke="#a9a69f" stroke-width="1"/>
<line x1="282.2" y1="622.3" x2="285.1" y2="621.7" stroke="#a9a69f" stroke-width="1"/>
<line x1="281.5" y1="619.9" x2="284.4" y2="618.9" stroke="#a9a69f" stroke-width="1"/>
<line x1="280.6" y1="617.5" x2="283.3" y2="616.2" stroke="#a9a69f" stroke-width="1"/>
<line x1="279.4" y1="615.2" x2="281.9" y2="613.7" stroke="#a9a69f" stroke-width="1"/>
<line x1="277.9" y1="613.1" x2="280.3" y2="611.3" stroke="#a9a69f" stroke-width="1"/>
<line x1="276.2" y1="611.2" x2="278.4" y2="609.1" stroke="#a9a69f" stroke-width="1"/>
<line x1="274.4" y1="609.5" x2="276.2" y2="607.2" stroke="#a9a69f" stroke-width="1"/>
<line x1="272.3" y1="608.0" x2="273.9" y2="605.5" stroke="#a9a69f" stroke-width="1"/>
<line x1="270.1" y1="606.8" x2="271.4" y2="604.1" stroke="#a9a69f" stroke-width="1"/>
<line x1="267.7" y1="605.8" x2="268.7" y2="603.0" stroke="#a9a69f" stroke-width="1"/>
<line x1="265.3" y1="605.1" x2="265.9" y2="602.2" stroke="#a9a69f" stroke-width="1"/>
<line x1="262.7" y1="604.6" x2="263.1" y2="601.7" stroke="#a9a69f" stroke-width="1"/>
<line x1="260.2" y1="604.5" x2="260.2" y2="601.5" stroke="#a9a69f" stroke-width="1"/>
<line x1="257.7" y1="604.6" x2="257.3" y2="601.7" stroke="#a9a69f" stroke-width="1"/>
<line x1="255.1" y1="605.1" x2="254.5" y2="602.2" stroke="#a9a69f" stroke-width="1"/>
<line x1="252.7" y1="605.8" x2="251.7" y2="603.0" stroke="#a9a69f" stroke-width="1"/>
<line x1="250.3" y1="606.8" x2="249.0" y2="604.1" stroke="#a9a69f" stroke-width="1"/>
<line x1="248.1" y1="608.0" x2="246.5" y2="605.5" stroke="#a9a69f" stroke-width="1"/>
<line x1="246.0" y1="609.5" x2="244.2" y2="607.2" stroke="#a9a69f" stroke-width="1"/>
<line x1="244.2" y1="611.2" x2="242.0" y2="609.1" stroke="#a9a69f" stroke-width="1"/>
<line x1="242.5" y1="613.1" x2="240.1" y2="611.3" stroke="#a9a69f" stroke-width="1"/>
<line x1="241.0" y1="615.2" x2="238.5" y2="613.7" stroke="#a9a69f" stroke-width="1"/>
<line x1="239.8" y1="617.5" x2="237.1" y2="616.2" stroke="#a9a69f" stroke-width="1"/>
<line x1="238.9" y1="619.9" x2="236.0" y2="618.9" stroke="#a9a69f" stroke-width="1"/>
<line x1="238.2" y1="622.3" x2="235.3" y2="621.7" stroke="#a9a69f" stroke-width="1"/>
<line x1="237.8" y1="624.8" x2="234.8" y2="624.6" stroke="#a9a69f" stroke-width="1"/>
<line x1="237.7" y1="627.4" x2="234.7" y2="627.4" stroke="#a9a69f" stroke-width="1"/>
<line x1="237.9" y1="629.9" x2="234.9" y2="630.3" stroke="#a9a69f" stroke-width="1"/>
<line x1="238.4" y1="632.4" x2="235.5" y2="633.2" stroke="#a9a69f" stroke-width="1"/>
<line x1="239.1" y1="634.9" x2="236.3" y2="635.9" stroke="#a9a69f" stroke-width="1"/>
<line x1="240.2" y1="637.2" x2="237.5" y2="638.6" stroke="#a9a69f" stroke-width="1"/>
<line x1="241.4" y1="639.4" x2="238.9" y2="641.1" stroke="#a9a69f" stroke-width="1"/>
<line x1="243.0" y1="641.5" x2="240.7" y2="643.4" stroke="#a9a69f" stroke-width="1"/>
<circle cx="260.2" cy="627" r="21" fill="url(#gKnobL)"/>
<circle cx="260.2" cy="627" r="12.5" fill="#d8d5ce"/>
<line x1="248.7" y1="607.1" x2="245.7" y2="601.9" stroke="#000" stroke-width="1"/>
<text x="230" y="601" font-size="9" fill="#000" textLength="24" lengthAdjust="spacingAndGlyphs" >0.5мс</text>
<line x1="271.7" y1="607.1" x2="274.7" y2="601.9" stroke="#000" stroke-width="1"/>
<text x="269" y="601" font-size="9" fill="#000" textLength="23" lengthAdjust="spacingAndGlyphs" >0.1мс</text>
<line x1="239.4" y1="617.3" x2="233.9" y2="614.7" stroke="#000" stroke-width="1"/>
<text x="221" y="614" font-size="9" fill="#000" textLength="15" lengthAdjust="spacingAndGlyphs" >1мс</text>
<line x1="281.0" y1="617.3" x2="286.5" y2="614.7" stroke="#000" stroke-width="1"/>
<text x="285" y="614" font-size="9" fill="#000" textLength="24" lengthAdjust="spacingAndGlyphs" >50мкс</text>
<line x1="237.2" y1="627.0" x2="231.2" y2="627.0" stroke="#000" stroke-width="1"/>
<text x="216" y="633" font-size="9" fill="#000" textLength="16" lengthAdjust="spacingAndGlyphs" >5мс</text>
<line x1="283.2" y1="627.0" x2="289.2" y2="627.0" stroke="#000" stroke-width="1"/>
<text x="288" y="633" font-size="9" fill="#000" textLength="24" lengthAdjust="spacingAndGlyphs" >-10мкс</text>
<line x1="242.6" y1="641.8" x2="238.0" y2="645.6" stroke="#000" stroke-width="1"/>
<text x="218" y="647" font-size="9" fill="#000" textLength="20" lengthAdjust="spacingAndGlyphs" >10мс</text>
<line x1="277.8" y1="641.8" x2="282.4" y2="645.6" stroke="#a0a0a0" stroke-width="1"/>
<text x="283" y="647" font-size="9" fill="#a0a0a0" textLength="20" lengthAdjust="spacingAndGlyphs" >5мкс</text>
<path d="M257.7 609.5l5 2.5l-5 2.5z" fill="#006000" transform="rotate(-90.0 260.2 612.0)"/>
<text x="260.2" y="630.5" font-size="9" fill="#006000" textLength="23.5" lengthAdjust="spacingAndGlyphs" text-anchor="middle" >0,3мс</text>
<text x="297" y="600" font-size="11" fill="#ff0000" textLength="16.5" lengthAdjust="spacingAndGlyphs" >Buf</text>
<rect x="213.5" y="651.5" width="18" height="19" rx="3" fill="url(#gGy)" stroke="#7a7a7a"/>
<rect x="232.5" y="651.5" width="18" height="19" rx="3" fill="url(#gGy)" stroke="#7a7a7a"/>
<rect x="251.5" y="651.5" width="18" height="19" rx="3" fill="url(#gGy)" stroke="#7a7a7a"/>
<path d="M225 664l4.5 4.5" stroke="#d0a020" stroke-width="2.6"/><circle cx="220.6" cy="658.6" r="5.4" fill="#cfe4f8" stroke="#6a5cc0" stroke-width="1.1"/><path d="M217.3 658.6h6.6M220.6 655.3v6.6" stroke="#10409a" stroke-width="2"/>
<path d="M244 664l4.5 4.5" stroke="#8a8a90" stroke-width="2.6"/><circle cx="239.5" cy="658.5" r="5.4" fill="#e8e8ec" stroke="#707078" stroke-width="1.1"/><path d="M236.2 658.5h6.6" stroke="#303038" stroke-width="2"/>
<path d="M254.5 653.5h8.5l3.5 3.5v12h-12z" fill="#f4f4f6" stroke="#b0b0b8" stroke-width="1"/><path d="M263 653.5v3.5h3.5" fill="none" stroke="#c0c0c8" stroke-width="1"/>
<rect x="272" y="653" width="43" height="16" fill="#ffffff" />
<rect x="303" y="654" width="11" height="14" fill="#d4d0c8" />
<path d="M305.5 660h6l-3 3z" fill="#000"/>
<text x="275.5" y="664" font-size="11" fill="#000" font-weight="bold" textLength="11.5" lengthAdjust="spacingAndGlyphs" >1:1</text>
<rect x="337" y="596" width="89" height="16" rx="2" fill="url(#gGr)" stroke="#808080" stroke-width="2"/>
<text x="381.5" y="608.5" font-size="11" fill="#006000" textLength="54" lengthAdjust="spacingAndGlyphs" text-anchor="middle" >Включена</text>
<rect x="337" y="616" width="28" height="16" rx="2" fill="url(#gGy)" stroke="#808080" stroke-width="2"/>
<text x="351.0" y="628.5" font-size="11" fill="#ff0000" textLength="8" lengthAdjust="spacingAndGlyphs" text-anchor="middle" >A</text>
<rect x="367" y="616" width="28" height="16" rx="2" fill="url(#gBl)" stroke="#808080" stroke-width="2"/>
<text x="381.0" y="628.5" font-size="11" fill="#0000ff" textLength="8" lengthAdjust="spacingAndGlyphs" text-anchor="middle" >B</text>
<rect x="397" y="616" width="29" height="16" rx="2" fill="url(#gGy)" stroke="#808080" stroke-width="2"/>
<text x="411.5" y="628.5" font-size="11" fill="#000080" textLength="17" lengthAdjust="spacingAndGlyphs" text-anchor="middle" >Ext</text>
<rect x="337" y="636" width="43" height="17" rx="2" fill="url(#gGy)" stroke="#808080" stroke-width="2"/>
<rect x="383" y="636" width="43" height="17" rx="2" fill="url(#gGr)" stroke="#808080" stroke-width="2"/>
<path d="M344 650.5H353L362.5 639H371" fill="none" stroke="#000" stroke-width="1.4"/><path d="M360.5 641L358 648.7L353.4 644.9z" fill="#000"/>
<path d="M392.5 639.5H399.5L409.5 651H419" fill="none" stroke="#000" stroke-width="1.4"/><path d="M407.5 648.5L404.9 640.5L400.3 644.5z" fill="#000"/>
<rect x="337" y="656" width="20" height="16" rx="2" fill="url(#gGy)" stroke="#808080" stroke-width="2"/>
<rect x="359" y="656" width="20" height="16" rx="2" fill="url(#gGr)" stroke="#808080" stroke-width="2"/>
<path d="M338 660l4 2l-4 2z" fill="#ff0000"/><path d="M342 662h14" stroke="#ff0000" stroke-width="1" stroke-dasharray="1 1"/><path d="M338 668q4 4 8 -3t8 -6" fill="none" stroke="#ff0000" stroke-width="1.2"/>
<path d="M362 658.5h14M362 666.5h8M364.5 658v8.5" stroke="#000" stroke-width="1.2"/><path d="M362 669q4 3 8 -4t8 -6" fill="none" stroke="#ff0000" stroke-width="1.2"/>
<rect x="383" y="655" width="36" height="18" fill="#ffffff" />
<rect x="383" y="655" width="36" height="1" fill="#808080" />
<rect x="383" y="655" width="1" height="18" fill="#808080" />
<rect x="383" y="672" width="36" height="1" fill="#fff" />
<rect x="418" y="655" width="1" height="18" fill="#fff" />
<text x="385" y="666" font-size="11" fill="#000" textLength="15.5" lengthAdjust="spacingAndGlyphs" >0,5</text>
<text x="420.5" y="666" font-size="11" fill="#000" textLength="6.5" lengthAdjust="spacingAndGlyphs" >В</text>
<text x="444" y="602.5" font-size="10" fill="#800080" textLength="69" lengthAdjust="spacingAndGlyphs" >T1 =-14,69 мс</text>
<text x="532" y="602.5" font-size="10" fill="#008000" textLength="65.6" lengthAdjust="spacingAndGlyphs" >T2 =154,0 мс</text>
<text x="620.3" y="602.5" font-size="10" fill="#008000" textLength="17.7" lengthAdjust="spacingAndGlyphs" >T2 -</text>
<text x="643.7" y="602.5" font-size="10" fill="#800080" textLength="11" lengthAdjust="spacingAndGlyphs" >T1</text>
<text x="658.4" y="602.5" font-size="10" fill="#800080" textLength="8" lengthAdjust="spacingAndGlyphs" >=</text>
<text x="667.9" y="602.5" font-size="10" fill="#008000" textLength="41" lengthAdjust="spacingAndGlyphs" >168,7 мс</text>
<text x="439.7" y="612.7" font-size="10" fill="#800080" textLength="7.3" lengthAdjust="spacingAndGlyphs" >U</text>
<text x="447" y="614.9000000000001" font-size="10" fill="#ff0000" textLength="6.3" lengthAdjust="spacingAndGlyphs" >A</text>
<text x="453.6" y="612.7" font-size="10" fill="#800080" textLength="48.6" lengthAdjust="spacingAndGlyphs" >1=-0,48 В</text>
<text x="527.5" y="612.7" font-size="10" fill="#008000" textLength="7.5" lengthAdjust="spacingAndGlyphs" >U</text>
<text x="535" y="614.9000000000001" font-size="10" fill="#ff0000" textLength="6" lengthAdjust="spacingAndGlyphs" >A</text>
<text x="541" y="612.7" font-size="10" fill="#008000" textLength="12.9" lengthAdjust="spacingAndGlyphs" >2=</text>
<text x="615.9" y="612.7" font-size="10" fill="#008000" textLength="7.1" lengthAdjust="spacingAndGlyphs" >U</text>
<text x="623.2" y="614.9000000000001" font-size="10" fill="#ff0000" textLength="5.8" lengthAdjust="spacingAndGlyphs" >A</text>
<text x="629" y="612.7" font-size="10" fill="#008000" textLength="10.3" lengthAdjust="spacingAndGlyphs" >2-</text>
<text x="639.3" y="612.7" font-size="10" fill="#800080" textLength="7.3" lengthAdjust="spacingAndGlyphs" >U</text>
<text x="646.6" y="614.9000000000001" font-size="10" fill="#ff0000" textLength="6.6" lengthAdjust="spacingAndGlyphs" >A</text>
<text x="653.2" y="612.7" font-size="10" fill="#800080" textLength="13.2" lengthAdjust="spacingAndGlyphs" >1=</text>
<text x="439.7" y="622.2" font-size="10" fill="#800080" textLength="7.3" lengthAdjust="spacingAndGlyphs" >U</text>
<text x="447" y="624.4000000000001" font-size="10" fill="#0000ff" textLength="6.3" lengthAdjust="spacingAndGlyphs" >B</text>
<text x="453.6" y="622.2" font-size="10" fill="#800080" textLength="12.4" lengthAdjust="spacingAndGlyphs" >1=</text>
<text x="527.5" y="622.2" font-size="10" fill="#008000" textLength="7.5" lengthAdjust="spacingAndGlyphs" >U</text>
<text x="535" y="624.4000000000001" font-size="10" fill="#0000ff" textLength="6" lengthAdjust="spacingAndGlyphs" >B</text>
<text x="541" y="622.2" font-size="10" fill="#008000" textLength="48.7" lengthAdjust="spacingAndGlyphs" >2= 0,13 В</text>
<text x="615.9" y="622.2" font-size="10" fill="#008000" textLength="7.1" lengthAdjust="spacingAndGlyphs" >U</text>
<text x="623.2" y="624.4000000000001" font-size="10" fill="#0000ff" textLength="5.8" lengthAdjust="spacingAndGlyphs" >B</text>
<text x="629" y="622.2" font-size="10" fill="#008000" textLength="10.3" lengthAdjust="spacingAndGlyphs" >2-</text>
<text x="639.3" y="622.2" font-size="10" fill="#800080" textLength="7.3" lengthAdjust="spacingAndGlyphs" >U</text>
<text x="646.6" y="624.4000000000001" font-size="10" fill="#0000ff" textLength="6.6" lengthAdjust="spacingAndGlyphs" >B</text>
<text x="653.2" y="622.2" font-size="10" fill="#800080" textLength="4.8" lengthAdjust="spacingAndGlyphs" >1</text>
<text x="658.4" y="622.2" font-size="10" fill="#008000" textLength="51.6" lengthAdjust="spacingAndGlyphs" >=999,13 В</text>
<text x="440.6" y="653" font-size="10" fill="#ff0000" textLength="69.3" lengthAdjust="spacingAndGlyphs" >U- =-65,77 мВ</text>
<text x="523.6" y="653" font-size="10" fill="#0000ff" textLength="70.9" lengthAdjust="spacingAndGlyphs" >U- = -52,06 мВ</text>
<text x="440" y="662.4" font-size="10" fill="#ff0000" textLength="57.4" lengthAdjust="spacingAndGlyphs" >U~= 1,06 В</text>
<text x="523.6" y="662.4" font-size="10" fill="#0000ff" textLength="72.6" lengthAdjust="spacingAndGlyphs" >U~=531,86 мВ</text>
<text x="443" y="671.9" font-size="10" fill="#ff0000" textLength="60.2" lengthAdjust="spacingAndGlyphs" >F  = 72,6 Гц</text>
<text x="527" y="671.9" font-size="10" fill="#0000ff" textLength="62.5" lengthAdjust="spacingAndGlyphs" >F  =442,3 Гц</text>
<rect x="613.5" y="646.5" width="83" height="24" rx="3" fill="url(#gBt)" stroke="#7c7c7c" stroke-width="1"/>
<path d="M626.5 650.5v14l8 -7z" fill="#40d040" stroke="#208020"/>
<text x="640" y="663" font-size="12" fill="#007000" font-weight="bold" textLength="48" lengthAdjust="spacingAndGlyphs" >Однокр.</text>
<rect x="698.5" y="646.5" width="83" height="24" rx="3" fill="url(#gBt)" stroke="#7c7c7c" stroke-width="1"/>
<path d="M713.5 650.5v14l7 -7z" fill="#40d040" stroke="#208020"/><path d="M720.5 650.5v14l7 -7z" fill="#40d040" stroke="#208020"/>
<text x="733" y="663" font-size="12" fill="#007000" font-weight="bold" textLength="33" lengthAdjust="spacingAndGlyphs" >Цикл.</text>
<rect x="727.5" y="595.5" width="10" height="11" fill="#fff" stroke="#808080" stroke-width="1"/>
<text x="742" y="604.5" font-size="11" fill="#ff0000" textLength="18" lengthAdjust="spacingAndGlyphs" >Вкл</text>
<rect x="763.5" y="594.5" width="17" height="13" rx="3" fill="url(#gBt)" stroke="#808080"/>
<rect x="767" y="602" width="2" height="2" fill="#ff0000" />
<rect x="770" y="602" width="2" height="2" fill="#ff0000" />
<rect x="773" y="602" width="2" height="2" fill="#ff0000" />
<rect x="727.5" y="611.5" width="10" height="11" fill="#fff" stroke="#808080" stroke-width="1"/>
<text x="742" y="620.5" font-size="11" fill="#0000ff" textLength="18" lengthAdjust="spacingAndGlyphs" >Вкл</text>
<rect x="763.5" y="610.5" width="17" height="13" rx="3" fill="url(#gBt)" stroke="#808080"/>
<rect x="767" y="618" width="2" height="2" fill="#0000ff" />
<rect x="770" y="618" width="2" height="2" fill="#0000ff" />
<rect x="773" y="618" width="2" height="2" fill="#0000ff" />
</svg></body></html>
